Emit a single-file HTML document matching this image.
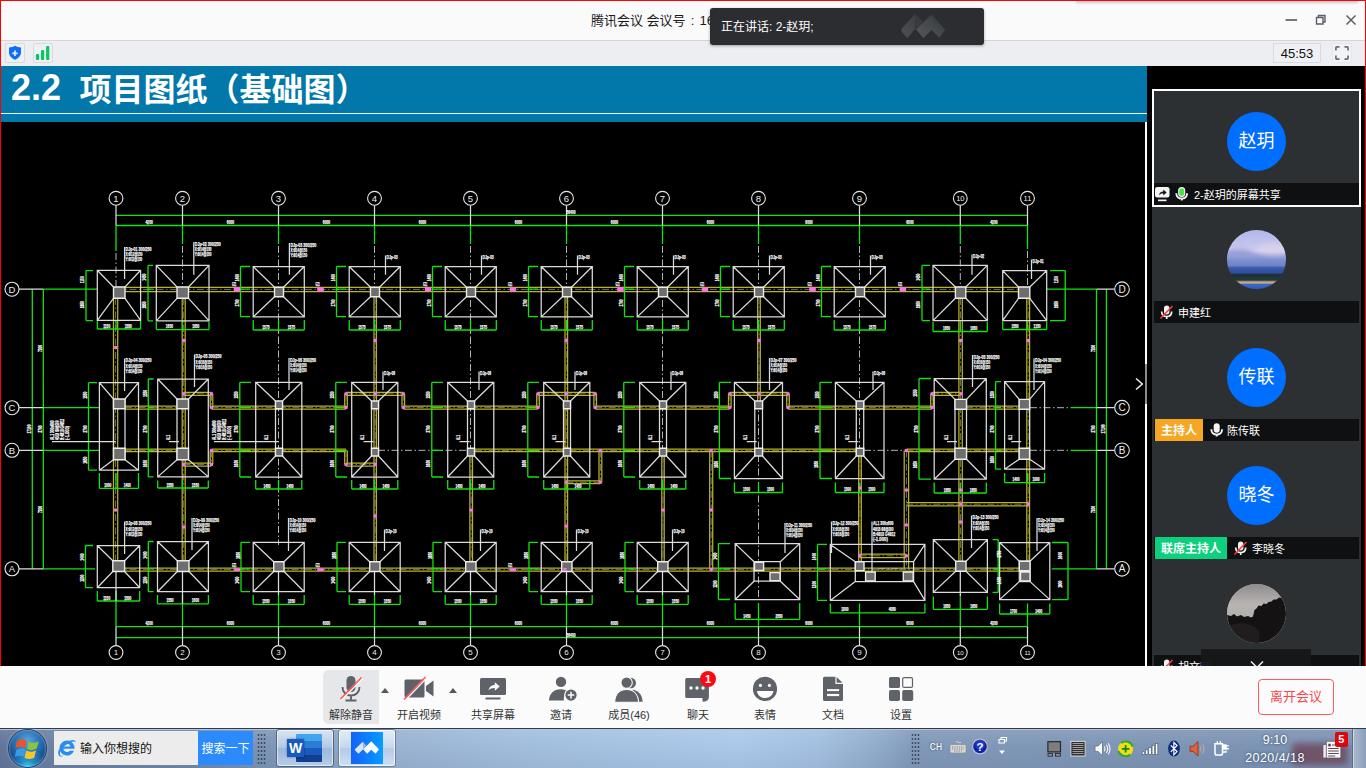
<!DOCTYPE html>
<html lang="zh-CN"><head><meta charset="utf-8"><title>腾讯会议</title>
<style>
*{box-sizing:border-box;margin:0;padding:0}
html,body{width:1366px;height:768px;overflow:hidden;background:#000}
body{position:relative;font-family:"Liberation Sans","Noto Sans CJK SC",sans-serif;font-size:12px;color:#222}
.abs{position:absolute}
svg{position:absolute;display:block}
svg.cad{left:0;top:0}
#titlebar{left:0;top:0;width:1366px;height:41px;background:#fafafb;border-bottom:1px solid #d4d5d9}
#title{left:591px;top:9.500px;font-size:13px;color:#1b1b1b;letter-spacing:0;white-space:nowrap}
#strip{left:0;top:41px;width:1366px;height:25px;background:#edeef2}
.sbtn{position:absolute;border:1px solid #d9dade;border-radius:1px;background:#eff0f3}
#timer{left:1273px;top:43px;width:48px;height:20px;font-size:13px;line-height:19px;text-align:center;color:#111}
#speaking{left:710px;top:8px;width:274px;height:37px;background:#2b2d31;border-radius:3px;box-shadow:0 1px 3px rgba(0,0,0,.35);color:#fff;font-size:12px;line-height:39px;padding-left:11px;white-space:nowrap}
#slidehead{left:0;top:66px;width:1147px;height:56px;background:#0277a9}
#slidehead i{position:absolute;left:0;top:46.6px;width:1147px;height:1.4px;background:#f4f8fb}
#slidetitle{left:12px;top:64px;font-size:32px;line-height:46px;color:#fff;white-space:pre;font-family:"Liberation Sans","Noto Sans CJK SC",sans-serif}
#slidetitle b{position:absolute;left:0;top:0}
#slidetitle #st2{left:67.500px;top:2.500px}
#stage{left:0;top:122px;width:1147px;height:544px;background:#000}
#vline{left:1145px;top:122px;width:2px;height:544px;background:#fff}
#redL{left:0;top:0;width:1px;height:728px;background:#f00}
#redT{left:0;top:0;width:1366px;height:1px;background:#f00}
#redR{left:1365px;top:0;width:1px;height:728px;background:#f00}
#pink{left:1077px;top:0;width:280px;height:1px;background:#c00;box-shadow:0 1px 2.5px 1px rgba(0,0,0,.2)}
/* side panel */
#side{left:1147px;top:66px;width:218px;height:600px;background:#000;overflow:hidden}
.tile{position:absolute;left:5px;width:209px;height:118px;background:#2d3033}
.tile .av{position:absolute;left:75px;top:23px;width:59px;height:59px;border-radius:50%;background:#006eff;color:#fff;font-size:18px;line-height:58px;text-align:center;overflow:hidden}
.tile .nb{position:absolute;left:2px;top:94px;width:205px;height:22px;background:#0f1012;color:#fff;font-size:12px;line-height:24px;white-space:nowrap}
.tile .nb span.n{position:absolute;top:0}
.badge{position:absolute;left:0;top:0;height:22px;color:#fff;font-size:12px;line-height:24px;font-weight:bold;text-align:center}
/* toolbar */
#toolbar{left:0;top:666px;width:1366px;height:62px;background:#fbfbfc}
.tb{position:absolute;top:0;height:62px;text-align:center;font-size:11px;color:#333;white-space:nowrap}
.tb span{position:absolute;left:-20px;right:-20px;top:41px;line-height:16px}
#leave{left:1258px;top:13px;width:76px;height:36px;border:1px solid #ff5a5f;border-radius:4px;color:#f5474c;font-size:13px;line-height:34px;text-align:center}
/* taskbar */
#taskbar{left:0;top:728px;width:1366px;height:40px;background:linear-gradient(rgba(255,255,255,.10),rgba(255,255,255,0) 45%,rgba(0,0,20,.05)),linear-gradient(90deg,#62769a 0,#6a81a3 3%,#7189ab 14%,#7e97b8 20%,#9ab3d2 29%,#a3bfdf 40%,#abc8e9 54%,#a3bfe0 60%,#8fa9c9 64.6%,#8199b9 67%,#7b92b2 100%)}
#taskbar .topl{position:absolute;left:0;top:0;width:1366px;height:2px;background:linear-gradient(#2f3a4c 0,#2f3a4c 50%,#b9c6d9 50%,#b9c6d9 100%)}
</style></head><body>
<div id="titlebar" class="abs"></div>
<div id="title" class="abs">腾讯会议 会议号<span style="margin:0 1.500px"> : </span>164 386 779</div>
<div id="strip" class="abs"></div>
<div class="sbtn" style="left:5px;top:43px;width:20px;height:20px;border-radius:2px"></div>
<div class="sbtn" style="left:33px;top:43px;width:20px;height:20px;border-radius:2px"></div>
<svg style="left:8px;top:45px" width="14" height="16" viewBox="8 45 14 16"><path d="M15 45.800C13.200 47 11 47.400 9 47.400v5.200c0 3.400 2.700 5.800 6 7.200 3.300-1.400 6-3.800 6-7.200v-5.200c-2 0-4.200-.4-6-1.600z" fill="#0d6efd"/><path d="M15 50.600v5.400M12.300 53.300h5.400" stroke="#e6efff" stroke-width="1.700"/></svg>
<svg style="left:35px;top:45px" width="16" height="16" viewBox="35 45 16 16"><rect x="35.900" y="53.900" width="3.200" height="6" rx="1" fill="#06c862"/><rect x="41" y="50" width="3.200" height="9.900" rx="1" fill="#06c862"/><rect x="46.100" y="46" width="3.200" height="13.900" rx="1" fill="#06c862"/></svg>
<div id="timer" class="abs sbtn">45:53</div>
<div class="sbtn" style="left:1332px;top:43px;width:20px;height:20px;background:#f2f3f6;border-color:#e6e7ea"></div>
<svg style="left:1335px;top:46px" width="14" height="14" viewBox="0 0 14 14"><path d="M.9 4.500V1.900q0-1 1-1h2.600M9.500.9h2.600q1 0 1 1v2.600M13.100 9.500v2.600q0 1-1 1H9.500M4.500 13.100H1.900q-1 0-1-1V9.500" fill="none" stroke="#6a6d75" stroke-width="1.700"/></svg>
<svg style="left:1280px;top:10px" width="80" height="20" viewBox="0 0 80 20"><path d="M5.500 10h11.500" stroke="#5c5f66" stroke-width="1.700"/><path d="M36.500 7.500h6.500v6.500h-6.500zM38.500 7.500v-2h6.500v6.500h-2" fill="none" stroke="#5c5f66" stroke-width="1.400"/><path d="M66.500 5.500l9 9M75.500 5.500l-9 9" stroke="#5c5f66" stroke-width="1.500"/></svg>
<div id="pink" class="abs"></div>
<div id="speaking" class="abs">正在讲话: 2-赵玥;</div>
<svg style="left:896px;top:10px" width="56" height="32" viewBox="896 10 56 32"><defs><linearGradient id="lg1" x1="0" y1="1" x2="1" y2="0"><stop offset="0" stop-color="#54575b"/><stop offset=".55" stop-color="#44474b"/><stop offset="1" stop-color="#2f3236"/></linearGradient><linearGradient id="lg2" x1="0" y1="1" x2="1" y2="0"><stop offset="0" stop-color="#4d5054"/><stop offset="1" stop-color="#3c3f43"/></linearGradient></defs><path d="M915.200 13.900L902 28.300q-1.500 1.800 0 3.600L907.300 38l7.900-8.900z" fill="url(#lg2)"/><path d="M915.200 13.900l7.900 7.900-7.500 7.300z" fill="#393b3f"/><path d="M931.400 14.600L915.900 29.400l7.600 8.600 7.900-7.900 7.900 7.500 5.900-7.900z" fill="url(#lg1)"/></svg>
<div id="slidehead" class="abs"><i></i></div>
<div id="slidetitle" class="abs"><b style="font-size:36px;left:-1px;top:1px">2.2</b><b id="st2">项目图纸（基础图）</b></div>
<div id="stage" class="abs"></div>
<div id="vline" class="abs"></div>
<div id="redL" class="abs"></div><div id="redT" class="abs"></div><div id="redR" class="abs"></div>
<svg class="cad" width="1366" height="768" viewBox="0 0 1366 768">
<g fill="none" stroke-linecap="butt">
<path stroke="#b9b420" stroke-width="1.25" d="M116 287.3L1027.5 287.3M116 291.5L1027.5 291.5M116 568L1027.5 568M116 571.2L1027.5 571.2M125 406.2L177 406.2M125 409L177 409M183.5 392.3L211.5 392.3M183.5 395.3L211.5 395.3M210.2 393.8L210.2 407.6M212.8 393.8L212.8 407.6M211.5 406.2L346 406.2M211.5 409L346 409M344.7 393.8L344.7 407.6M347.3 393.8L347.3 407.6M346 392.3L403.3 392.3M346 395.3L403.3 395.3M402 393.8L402 407.6M404.6 393.8L404.6 407.6M403.3 406.2L538 406.2M403.3 409L538 409M536.7 393.8L536.7 407.6M539.3 393.8L539.3 407.6M538 392.3L595.2 392.3M538 395.3L595.2 395.3M593.9 393.8L593.9 407.6M596.5 393.8L596.5 407.6M595.2 406.2L729.8 406.2M595.2 409L729.8 409M728.5 393.8L728.5 407.6M731.1 393.8L731.1 407.6M729.8 392.3L788 392.3M729.8 395.3L788 395.3M786.7 393.8L786.7 407.6M789.3 393.8L789.3 407.6M788 406.2L932 406.2M788 409L932 409M930.7 393.8L930.7 407.6M933.3 393.8L933.3 407.6M932 392.3L961 392.3M932 395.3L961 395.3M966 406.2L1019 406.2M966 409L1019 409M125 449.1L177 449.1M125 451.7L177 451.7M183.5 463.1L211.5 463.1M183.5 466.1L211.5 466.1M210.2 450.4L210.2 464.6M212.8 450.4L212.8 464.6M211.5 449.1L346 449.1M211.5 451.7L346 451.7M344.7 450.4L344.7 464.6M347.3 450.4L347.3 464.6M346 463.1L375.2 463.1M346 466.1L375.2 466.1M475 449.1L856.5 449.1M475 451.7L856.5 451.7M599 450.4L599 482.3M601.8 450.4L601.8 482.3M566.3 480.9L600.4 480.9M566.3 483.7L600.4 483.7M709.7 450.4L709.7 569.6M712.7 450.4L712.7 569.6M906.4 449.1L1019 449.1M906.4 451.7L1019 451.7M904.2 450.4L904.2 569.6M908.6 450.4L908.6 569.6M906.4 502.5L1029 502.5M906.4 505.9L1029 505.9M859.6 554.1L906.4 554.1M859.6 557.5L906.4 557.5M113.5 298L113.5 561M117.7 298L117.7 561M182.2 298L182.2 561M185.2 298L185.2 561M374 297L374 561.7M376.4 297L376.4 561.7M469.9 456L469.9 561.7M472.5 456L472.5 561.7M565 297L565 561.7M567.6 297L567.6 561.7M661.8 456L661.8 561.7M664.2 456L664.2 561.7M757.7 297L757.7 401M760.3 297L760.3 401M858.7 456L858.7 561.7M861.3 456L861.3 561.7M958.9 298L958.9 561.2M962.3 298L962.3 561.2M1026.8 298L1026.8 561.2M1029.6 298L1029.6 561.2"/>
<path stroke="#6f6f7a" stroke-width="1" stroke-dasharray="7 2.5 1.5 2.5" d="M116 289.4H1027.5M116 569.6H1027.5M125 407.6H177M183.5 393.8H211.5M211.5 393.8V407.6M211.5 407.6H346M346 393.8V407.6M346 393.8H403.3M403.3 393.8V407.6M403.3 407.6H538M538 393.8V407.6M538 393.8H595.2M595.2 393.8V407.6M595.2 407.6H729.8M729.8 393.8V407.6M729.8 393.8H788M788 393.8V407.6M788 407.6H932M932 393.8V407.6M932 393.8H961M966 407.6H1019M125 450.4H177M183.5 464.6H211.5M211.5 450.4V464.6M211.5 450.4H346M346 450.4V464.6M346 464.6H375.2M475 450.4H856.5M600.4 450.4V482.3M566.3 482.3H600.4M711.2 450.4V569.6M906.4 450.4H1019M906.4 450.4V569.6M906.4 504.2H1029M859.6 555.8H906.4M115.6 298V561M183.7 298V561M375.2 297V561.7M471.2 456V561.7M566.3 297V561.7M663 456V561.7M759 297V401M860 456V561.7M960.6 298V561.2M1028.2 298V561.2"/>
<path stroke="#b4b4b4" stroke-width="1" stroke-dasharray="7 2.5 1.5 2.5" d="M116 253L116 287M182.5 246L182.5 287M278.5 246L278.5 337M374.5 246L374.5 287.3M470.5 246L470.5 337M566.5 246L566.5 287.3M662.5 246L662.5 337M758.5 246L758.5 287.3M859.5 246L859.5 337M960.3 246L960.3 287M1027.5 251L1027.5 287M278.5 337L278.5 545M470.5 337L470.5 456M662.5 337L662.5 456M758.5 401L758.5 600M859.5 337L859.5 456M378 450.3L468 450.3M864 450.3L906 450.3M878 568.8L902 568.8M1030 407.7L1070.6 407.7M1030 450.3L1070.6 450.3"/>
<path stroke="#10e410" stroke-width="1.3" d="M116 225.5L116 251M182.5 225.5L182.5 244M278.5 225.5L278.5 244M374.5 225.5L374.5 244M470.5 225.5L470.5 244M566.5 225.5L566.5 244M662.5 225.5L662.5 244M758.5 225.5L758.5 244M859.5 225.5L859.5 244M960.3 225.5L960.3 244M1027.5 225.5L1027.5 249M116 215.4L1027.5 215.4M116 225.5L1027.5 225.5M116 626.6L1027.5 626.6M116 637.7L1027.5 637.7M32.3 289.2L32.3 568.8M43.3 289.2L43.3 568.8M1096.5 289.2L1096.5 568.8M1106.4 289.2L1106.4 568.8M43.3 289.2L97 289.2M43.3 407.7L99 407.7M43.3 450.3L99 450.3M43.3 568.8L95 568.8M1047 289.2L1096.5 289.2M1070.6 407.7L1096.5 407.7M1070.6 450.3L1096.5 450.3M1051.7 568.8L1096.5 568.8M86 270.6L86 320.6M86 270.6L93 270.6M86 289.2L93 289.2M86 320.6L93 320.6M148 265.4L148 320.8M148 265.4L153 265.4M148 289.2L153 289.2M148 320.8L153 320.8M240.5 266.5L240.5 316.7M240.5 266.5L250 266.5M240.5 289.2L250 289.2M240.5 316.7L250 316.7M336.5 266.5L336.5 316.7M336.5 266.5L346 266.5M336.5 289.2L346 289.2M336.5 316.7L346 316.7M432.5 266.5L432.5 316.7M432.5 266.5L442 266.5M432.5 289.2L442 289.2M432.5 316.7L442 316.7M528.5 266.5L528.5 316.7M528.5 266.5L538 266.5M528.5 289.2L538 289.2M528.5 316.7L538 316.7M624.5 266.5L624.5 316.7M624.5 266.5L634 266.5M624.5 289.2L634 289.2M624.5 316.7L634 316.7M720.5 266.5L720.5 316.7M720.5 266.5L730 266.5M720.5 289.2L730 289.2M720.5 316.7L730 316.7M821.5 266.5L821.5 316.7M821.5 266.5L831 266.5M821.5 289.2L831 289.2M821.5 316.7L831 316.7M922 265.4L922 320.6M922 265.4L930 265.4M922 289.2L930 289.2M922 320.6L930 320.6M1065.2 270.6L1065.2 320.6M1065.2 270.6L1050 270.6M1065.2 289.2L1050 289.2M1065.2 320.6L1050 320.6M97.3 329L140.6 329M97.3 321L97.3 329M116 321L116 329M140.6 321L140.6 329M156.3 329.6L209 329.6M156.3 322L156.3 329.6M182.5 322L182.5 329.6M209 322L209 329.6M253.2 330L304.3 330M253.2 320L253.2 330M278.5 320L278.5 330M304.3 320L304.3 330M349.2 330L400.3 330M349.2 320L349.2 330M374.5 320L374.5 330M400.3 320L400.3 330M445.2 330L496.3 330M445.2 320L445.2 330M470.5 320L470.5 330M496.3 320L496.3 330M541.2 330L592.3 330M541.2 320L541.2 330M566.5 320L566.5 330M592.3 320L592.3 330M637.2 330L688.3 330M637.2 320L637.2 330M662.5 320L662.5 330M688.3 320L688.3 330M733.2 330L784.3 330M733.2 320L733.2 330M758.5 320L758.5 330M784.3 320L784.3 330M834.2 330L885.3 330M834.2 320L834.2 330M859.5 320L859.5 330M885.3 320L885.3 330M933 331.5L987.3 331.5M933 322L933 331.5M960.3 322L960.3 331.5M987.3 322L987.3 331.5M1002.7 329.5L1046.7 329.5M1002.7 321.5L1002.7 329.5M1027.5 321.5L1027.5 329.5M1046.7 321.5L1046.7 329.5M88.5 382.7L88.5 470.2M88.5 382.7L97 382.7M88.5 407.7L97 407.7M88.5 450.3L97 450.3M88.5 470.2L97 470.2M148.3 379L148.3 476.9M148.3 379L153.5 379M148.3 407.7L153.5 407.7M148.3 450.3L153.5 450.3M148.3 476.9L153.5 476.9M239.8 382.3L239.8 477M239.8 382.3L251 382.3M239.8 407.7L251 407.7M239.8 450.3L251 450.3M239.8 477L251 477M335.8 382.3L335.8 477M335.8 382.3L347 382.3M335.8 407.7L347 407.7M335.8 450.3L347 450.3M335.8 477L347 477M431.8 382.3L431.8 477M431.8 382.3L443 382.3M431.8 407.7L443 407.7M431.8 450.3L443 450.3M431.8 477L443 477M527.8 382.3L527.8 477M527.8 382.3L539 382.3M527.8 407.7L539 407.7M527.8 450.3L539 450.3M527.8 477L539 477M623.8 382.3L623.8 477M623.8 382.3L635 382.3M623.8 407.7L635 407.7M623.8 450.3L635 450.3M623.8 477L635 477M719.4 382.3L719.4 478.5M719.4 382.3L731 382.3M719.4 407.7L731 407.7M719.4 450.3L731 450.3M719.4 478.5L731 478.5M820 382.3L820 478.5M820 382.3L832 382.3M820 407.7L832 407.7M820 450.3L832 450.3M820 478.5L832 478.5M919 378.5L919 479.2M919 378.5L931 378.5M919 407.7L931 407.7M919 450.3L931 450.3M919 479.2L931 479.2M995.6 381.7L995.6 469.2M995.6 381.7L1001 381.7M995.6 407.7L1001 407.7M995.6 450.3L1001 450.3M995.6 469.2L1001 469.2M99.4 488.3L138.5 488.3M99.4 473L99.4 488.3M116 473L116 488.3M138.5 473L138.5 488.3M157.7 488L208.3 488M157.7 480.5L157.7 488M182.5 480.5L182.5 488M208.3 480.5L208.3 488M255.7 489L301.8 489M255.7 480L255.7 489M278.5 480L278.5 489M301.8 480L301.8 489M351.7 489L397.8 489M351.7 480L351.7 489M374.5 480L374.5 489M397.8 480L397.8 489M447.7 489L493.8 489M447.7 480L447.7 489M470.5 480L470.5 489M493.8 480L493.8 489M543.7 489L589.8 489M543.7 480L543.7 489M566.5 480L566.5 489M589.8 480L589.8 489M639.7 489L685.8 489M639.7 480L639.7 489M662.5 480L662.5 489M685.8 480L685.8 489M734.4 492.5L782.5 492.5M734.4 482.5L734.4 492.5M758.5 482.5L758.5 492.5M782.5 482.5L782.5 492.5M835.4 492.5L884 492.5M835.4 482.5L835.4 492.5M859.5 482.5L859.5 492.5M884 482.5L884 492.5M934.2 493L986.3 493M934.2 482.5L934.2 493M960.3 482.5L960.3 493M986.3 482.5L986.3 493M1004.6 482.7L1044.6 482.7M1004.6 473L1004.6 482.7M1027.5 473L1027.5 482.7M1044.6 473L1044.6 482.7M85.5 545.5L85.5 587.7M85.5 545.5L93 545.5M85.5 568.8L93 568.8M85.5 587.7L93 587.7M148.3 541.5L148.3 591.7M148.3 541.5L153.5 541.5M148.3 568.8L153.5 568.8M148.3 591.7L153.5 591.7M241 542.3L241 591.7M241 542.3L250 542.3M241 568.8L250 568.8M241 591.7L250 591.7M337 542.3L337 591.7M337 542.3L346 542.3M337 568.8L346 568.8M337 591.7L346 591.7M433 542.3L433 591.7M433 542.3L442 542.3M433 568.8L442 568.8M433 591.7L442 591.7M529 542.3L529 591.7M529 542.3L538 542.3M529 568.8L538 568.8M529 591.7L538 591.7M625 542.3L625 591.7M625 542.3L634 542.3M625 568.8L634 568.8M625 591.7L634 591.7M718.4 543.6L718.4 599.5M718.4 543.6L730 543.6M718.4 568.8L730 568.8M718.4 599.5L730 599.5M817.5 544.4L817.5 600.4M817.5 544.4L827 544.4M817.5 568.8L827 568.8M817.5 600.4L827 600.4M998.2 539.6L998.2 592.4M998.2 539.6L992.5 539.6M998.2 568.8L992.5 568.8M998.2 592.4L992.5 592.4M1068 542.5L1068 599.6M1068 542.5L1052 542.5M1068 568.8L1052 568.8M1068 599.6L1052 599.6M97.3 601L139.7 601M97.3 591L97.3 601M116 591L116 601M139.7 591L139.7 601M157.5 603.8L208.4 603.8M157.5 595L157.5 603.8M182.5 595L182.5 603.8M208.4 595L208.4 603.8M253.2 604.3L304.2 604.3M253.2 595L253.2 604.3M278.5 595L278.5 604.3M304.2 595L304.2 604.3M349.2 604.3L400.2 604.3M349.2 595L349.2 604.3M374.5 595L374.5 604.3M400.2 595L400.2 604.3M445.2 604.3L496.2 604.3M445.2 595L445.2 604.3M470.5 595L470.5 604.3M496.2 595L496.2 604.3M541.2 604.3L592.2 604.3M541.2 595L541.2 604.3M566.5 595L566.5 604.3M592.2 595L592.2 604.3M637.2 604.3L688.2 604.3M637.2 595L637.2 604.3M662.5 595L662.5 604.3M688.2 595L688.2 604.3M735.2 619.3L799.7 619.3M735.2 603L735.2 619.3M758.5 603L758.5 619.3M799.7 603L799.7 619.3M830.3 612.9L924.9 612.9M830.3 603.5L830.3 612.9M859.5 603.5L859.5 612.9M924.9 603.5L924.9 612.9M933.3 609.3L987.4 609.3M933.3 596.5L933.3 609.3M960.3 596.5L960.3 609.3M987.4 596.5L987.4 609.3M999.6 614L1049.8 614M999.6 603.5L999.6 614M1027.5 603.5L1027.5 614M1049.8 603.5L1049.8 614M116 601L116 626.5M182.5 603.8L182.5 626.5M278.5 595L278.5 626.5M374.5 595L374.5 626.5M470.5 595L470.5 626.5M566.5 595L566.5 626.5M662.5 595L662.5 626.5M758.5 603L758.5 626.5M859.5 603.5L859.5 626.5M960.3 596.5L960.3 626.5M1027.5 603.5L1027.5 626.5"/>
<path stroke="#dcdcdc" stroke-width="1.25" d="M97.3 270.3H140.6V320.3H97.3ZM97.3 270.3L113.5 287M140.6 270.3L125 287M97.3 320.3L113.5 298.3M140.6 320.3L125 298.3M156.3 265.4H209V320.8H156.3ZM156.3 265.4L177 287M209 265.4L188.5 287M156.3 320.8L177 298.3M209 320.8L188.5 298.3M933 265.4H987.3V320.6H933ZM933 265.4L955.4 287M987.3 265.4L965.8 287M933 320.6L955.4 298.3M987.3 320.6L965.8 298.3M1002.7 270.6H1046.7V320.6H1002.7ZM1002.7 270.6L1018.5 287M1046.7 270.6L1029.8 287M1002.7 320.6L1018.5 298.3M1046.7 320.6L1029.8 298.3M253.2 266.5H304.3V316.9H253.2ZM253.2 266.5L274.5 287.3M304.3 266.5L283.5 287.3M253.2 316.9L274.5 296.7M304.3 316.9L283.5 296.7M349.2 266.5H400.3V316.9H349.2ZM349.2 266.5L370.5 287.3M400.3 266.5L379.5 287.3M349.2 316.9L370.5 296.7M400.3 316.9L379.5 296.7M445.2 266.5H496.3V316.9H445.2ZM445.2 266.5L466.5 287.3M496.3 266.5L475.5 287.3M445.2 316.9L466.5 296.7M496.3 316.9L475.5 296.7M541.2 266.5H592.3V316.9H541.2ZM541.2 266.5L562.5 287.3M592.3 266.5L571.5 287.3M541.2 316.9L562.5 296.7M592.3 316.9L571.5 296.7M637.2 266.5H688.3V316.9H637.2ZM637.2 266.5L658.5 287.3M688.3 266.5L667.5 287.3M637.2 316.9L658.5 296.7M688.3 316.9L667.5 296.7M733.2 266.5H784.3V316.9H733.2ZM733.2 266.5L754.5 287.3M784.3 266.5L763.5 287.3M733.2 316.9L754.5 296.7M784.3 316.9L763.5 296.7M834.2 266.5H885.3V316.9H834.2ZM834.2 266.5L855.5 287.3M885.3 266.5L864.5 287.3M834.2 316.9L855.5 296.7M885.3 316.9L864.5 296.7M99.4 382.7H138.5V470.2H99.4ZM99.4 382.7L113.5 399M138.5 382.7L125 399M99.4 470.2L113.5 459.8M138.5 470.2L125 459.8M113.5 399L113.5 459.8M125 399L125 459.8M157.7 379H208.3V476.9H157.7ZM157.7 379L177 399M208.3 379L188.5 399M157.7 476.9L177 459.8M208.3 476.9L188.5 459.8M177 399L177 459.8M188.5 399L188.5 459.8M169 441.5L179 441.5M734.4 382.3H782.5V478.5H734.4ZM734.4 382.3L754.8 401M782.5 382.3L762.5 401M734.4 478.5L754.8 456M782.5 478.5L762.5 456M754.8 401L754.8 456M762.5 401L762.5 456M746.8 441.5L756.8 441.5M835.4 382.3H884V478.5H835.4ZM835.4 382.3L856.3 401M884 382.3L863.7 401M835.4 478.5L856.3 456M884 478.5L863.7 456M856.3 401L856.3 456M863.7 401L863.7 456M848.3 441.5L858.3 441.5M934.2 378.5H986.3V479.2H934.2ZM934.2 378.5L955 399.4M986.3 378.5L966.5 399.4M934.2 479.2L955 459.2M986.3 479.2L966.5 459.2M955 399.4L955 459.2M966.5 399.4L966.5 459.2M947 441.5L957 441.5M1004.6 381.7H1044.6V469.2H1004.6ZM1004.6 381.7L1019.2 399.4M1044.6 381.7L1029.6 399.4M1004.6 469.2L1019.2 459.2M1044.6 469.2L1029.6 459.2M1019.2 399.4L1019.2 459.2M1029.6 399.4L1029.6 459.2M1011.2 441.5L1021.2 441.5M255.7 382.3H301.8V477H255.7ZM255.7 382.3L275.5 401M301.8 382.3L282.5 401M255.7 477L275.5 456M301.8 477L282.5 456M275.5 401L275.5 456M282.5 401L282.5 456M267.5 441.5L277.5 441.5M351.7 382.3H397.8V477H351.7ZM351.7 382.3L371.5 401M397.8 382.3L378.5 401M351.7 477L371.5 456M397.8 477L378.5 456M371.5 401L371.5 456M378.5 401L378.5 456M363.5 441.5L373.5 441.5M447.7 382.3H493.8V477H447.7ZM447.7 382.3L467.5 401M493.8 382.3L474.5 401M447.7 477L467.5 456M493.8 477L474.5 456M467.5 401L467.5 456M474.5 401L474.5 456M459.5 441.5L469.5 441.5M543.7 382.3H589.8V477H543.7ZM543.7 382.3L563.5 401M589.8 382.3L570.5 401M543.7 477L563.5 456M589.8 477L570.5 456M563.5 401L563.5 456M570.5 401L570.5 456M555.5 441.5L565.5 441.5M639.7 382.3H685.8V477H639.7ZM639.7 382.3L659.5 401M685.8 382.3L666.5 401M639.7 477L659.5 456M685.8 477L666.5 456M659.5 401L659.5 456M666.5 401L666.5 456M651.5 441.5L661.5 441.5M97.3 545.5H139.7V587.7H97.3ZM97.3 545.5L112.8 560.8M139.7 545.5L124.6 560.8M97.3 587.7L112.8 571.5M139.7 587.7L124.6 571.5M157.5 541.5H208.4V591.7H157.5ZM157.5 541.5L177.3 560.8M208.4 541.5L189 560.8M157.5 591.7L177.3 571.5M208.4 591.7L189 571.5M933.3 539.6H987.4V592.4H933.3ZM933.3 539.6L955.7 561.2M987.4 539.6L966 561.2M933.3 592.4L955.7 571.3M987.4 592.4L966 571.3M253.2 542.3H304.2V591.7H253.2ZM253.2 542.3L273.7 561.7M304.2 542.3L284 561.7M253.2 591.7L273.7 571.5M304.2 591.7L284 571.5M349.2 542.3H400.2V591.7H349.2ZM349.2 542.3L369.7 561.7M400.2 542.3L380 561.7M349.2 591.7L369.7 571.5M400.2 591.7L380 571.5M445.2 542.3H496.2V591.7H445.2ZM445.2 542.3L465.7 561.7M496.2 542.3L476 561.7M445.2 591.7L465.7 571.5M496.2 591.7L476 571.5M541.2 542.3H592.2V591.7H541.2ZM541.2 542.3L561.7 561.7M592.2 542.3L572 561.7M541.2 591.7L561.7 571.5M592.2 591.7L572 571.5M637.2 542.3H688.2V591.7H637.2ZM637.2 542.3L657.7 561.7M688.2 542.3L668 561.7M637.2 591.7L657.7 571.5M688.2 591.7L668 571.5M735.2 543.6H799.7V599.5H735.2ZM735.2 543.6L754 561.7M799.7 543.6L780.3 561.7M735.2 599.5L754 581.2M799.7 599.5L780.3 581.2M754 561.7H780.3V581.2H754ZM830.3 544.4H924.9V600.4H830.3ZM830.3 544.4L855.3 561.7M924.9 544.4L913.6 561.7M830.3 600.4L855.3 581.6M924.9 600.4L913.6 581.6M855.3 561.7H913.6V581.6H855.3ZM999.6 542.5H1049.8V599.6H999.6ZM999.6 542.5L1019.3 561.2M1049.8 542.5L1030 561.2M999.6 599.6L1019.3 581.6M1049.8 599.6L1030 581.6M1019.3 561.2H1030V581.6H1019.3ZM116 205.3L116 225.5M116 626.5L116 645.5M182.5 205.3L182.5 225.5M182.5 626.5L182.5 645.5M278.5 205.3L278.5 225.5M278.5 626.5L278.5 645.5M374.5 205.3L374.5 225.5M374.5 626.5L374.5 645.5M470.5 205.3L470.5 225.5M470.5 626.5L470.5 645.5M566.5 205.3L566.5 225.5M566.5 626.5L566.5 645.5M662.5 205.3L662.5 225.5M662.5 626.5L662.5 645.5M758.5 205.3L758.5 225.5M758.5 626.5L758.5 645.5M859.5 205.3L859.5 225.5M859.5 626.5L859.5 645.5M960.3 205.3L960.3 225.5M960.3 626.5L960.3 645.5M1027.5 205.3L1027.5 225.5M1027.5 626.5L1027.5 645.5M116 215.4L116 225.5M1027.5 215.4L1027.5 225.5M19 289.2L43.3 289.2M1096.5 289.2L1114.5 289.2M19 407.7L43.3 407.7M1096.5 407.7L1114.5 407.7M19 450.3L43.3 450.3M1096.5 450.3L1114.5 450.3M19 568.8L43.3 568.8M1096.5 568.8L1114.5 568.8M116 571.5L116 601M182.5 571.5L182.5 603.8M278.5 571.5L278.5 595M374.5 571.5L374.5 595M470.5 571.5L470.5 595M566.5 571.5L566.5 595M662.5 571.5L662.5 595M960.3 571.3L960.3 596.5M124.6 247L124.6 279M193.8 242L193.8 274.8M289.4 243L289.4 274.8M385.5 255.5L385.5 274.8M481.5 255.5L481.5 274.8M577.5 255.5L577.5 274.8M673.5 255.5L673.5 274.8M769.5 255.5L769.5 274.8M870.5 255.5L870.5 274.8M972 254.5L972 274.8M1031.5 259.5L1031.5 279M124.6 358.5L124.6 391M194.5 354.5L194.5 387M289 358L289 390M383 371.5L383 390M479 371.5L479 390M575 371.5L575 390M671 371.5L671 390M769.5 358L769.5 390M873 371.5L873 390M972.5 355L972.5 387M1034 358.5L1034 390M124.6 521.5L124.6 554M192 518L192 550M288.5 518L288.5 551M384.5 529.5L384.5 551M480.5 529.5L480.5 551M576.5 529.5L576.5 551M672.5 529.5L672.5 551M785 523L785 553M831.5 521.5L831.5 553M872 521.5L872 578M971.5 515.5L971.5 548M1037 518L1037 551M52 441.5L116 441.5M214 441.5L278 441.5"/>
</g>
<path fill="#6e6e6e" stroke="#ececec" stroke-width="1.4" d="M113.5 287H125V298.3H113.5ZM177 287H188.5V298.3H177ZM955.4 287H965.8V298.3H955.4ZM1018.5 287H1029.8V298.3H1018.5ZM274.5 287.3H283.5V296.7H274.5ZM370.5 287.3H379.5V296.7H370.5ZM466.5 287.3H475.5V296.7H466.5ZM562.5 287.3H571.5V296.7H562.5ZM658.5 287.3H667.5V296.7H658.5ZM754.5 287.3H763.5V296.7H754.5ZM855.5 287.3H864.5V296.7H855.5ZM113.5 399H125V408.8H113.5ZM113.5 448.3H125V459.8H113.5ZM177 399H188.5V408.8H177ZM177 448.3H188.5V459.8H177ZM754.8 401H762.5V408.8H754.8ZM754.8 448.3H762.5V456H754.8ZM856.3 401H863.7V408.8H856.3ZM856.3 448.3H863.7V456H856.3ZM955 399.4H966.5V409.2H955ZM955 448.3H966.5V459.2H955ZM1019.2 399.4H1029.6V409.2H1019.2ZM1019.2 448.3H1029.6V459.2H1019.2ZM275.5 401H282.5V408.8H275.5ZM275.5 448.3H282.5V456H275.5ZM371.5 401H378.5V408.8H371.5ZM371.5 448.3H378.5V456H371.5ZM467.5 401H474.5V408.8H467.5ZM467.5 448.3H474.5V456H467.5ZM563.5 401H570.5V408.8H563.5ZM563.5 448.3H570.5V456H563.5ZM659.5 401H666.5V408.8H659.5ZM659.5 448.3H666.5V456H659.5ZM112.8 560.8H124.6V571.5H112.8ZM177.3 560.8H189V571.5H177.3ZM955.7 561.2H966V571.3H955.7ZM273.7 561.7H284V571.5H273.7ZM369.7 561.7H380V571.5H369.7ZM465.7 561.7H476V571.5H465.7ZM561.7 561.7H572V571.5H561.7ZM657.7 561.7H668V571.5H657.7ZM754.5 562.3H763.6V570.5H754.5ZM770 572.6H780V580.6H770ZM855.3 561.7H864V570.8H855.3ZM865.6 572H875.2V581H865.6ZM903.3 572H913.2V581H903.3ZM1019.3 561.2H1030V570.8H1019.3ZM1020.5 572H1030V581H1020.5Z"/>
<path fill="#ff6cff" d="M182 392.3H185V395.3H182ZM210 392.3H213V395.3H210ZM210 406.1H213V409.1H210ZM344.5 392.3H347.5V395.3H344.5ZM344.5 406.1H347.5V409.1H344.5ZM401.8 392.3H404.8V395.3H401.8ZM401.8 406.1H404.8V409.1H401.8ZM373.7 392.3H376.7V395.3H373.7ZM536.5 392.3H539.5V395.3H536.5ZM536.5 406.1H539.5V409.1H536.5ZM593.7 392.3H596.7V395.3H593.7ZM593.7 406.1H596.7V409.1H593.7ZM564.8 392.3H567.8V395.3H564.8ZM728.3 392.3H731.3V395.3H728.3ZM728.3 406.1H731.3V409.1H728.3ZM786.5 392.3H789.5V395.3H786.5ZM786.5 406.1H789.5V409.1H786.5ZM757.5 392.3H760.5V395.3H757.5ZM930.5 392.3H933.5V395.3H930.5ZM930.5 406.1H933.5V409.1H930.5ZM959.5 392.3H962.5V395.3H959.5ZM182 463.1H185V466.1H182ZM210 463.1H213V466.1H210ZM210 448.9H213V451.9H210ZM344.5 463.1H347.5V466.1H344.5ZM373.7 463.1H376.7V466.1H373.7ZM598.9 448.9H601.9V451.9H598.9ZM598.9 480.8H601.9V483.8H598.9ZM564.8 480.8H567.8V483.8H564.8ZM709.7 448.9H712.7V451.9H709.7ZM709.7 508.5H712.7V511.5H709.7ZM709.7 568.1H712.7V571.1H709.7ZM904.9 448.9H907.9V451.9H904.9ZM904.9 488.5H907.9V491.5H904.9ZM904.9 523.5H907.9V526.5H904.9ZM959.1 502.7H962.1V505.7H959.1ZM1026.7 502.7H1029.7V505.7H1026.7ZM858.1 554.3H861.1V557.3H858.1ZM904.9 554.3H907.9V557.3H904.9ZM114.1 346H117.1V349H114.1ZM114.1 508.5H117.1V511.5H114.1ZM182.2 339H185.2V342H182.2ZM182.2 525.5H185.2V528.5H182.2ZM373.7 339H376.7V342H373.7ZM373.7 514.5H376.7V517.5H373.7ZM469.7 508.5H472.7V511.5H469.7ZM564.8 339H567.8V342H564.8ZM564.8 524.5H567.8V527.5H564.8ZM661.5 508.5H664.5V511.5H661.5ZM757.5 339H760.5V342H757.5ZM858.5 486.5H861.5V489.5H858.5ZM959.1 339H962.1V342H959.1ZM959.1 488.5H962.1V491.5H959.1ZM959.1 520.5H962.1V523.5H959.1ZM1026.7 339H1029.7V342H1026.7ZM233.8 287.3H240.2V291.3H233.8ZM317.2 287.3H323.8V291.3H317.2ZM424.8 287.3H431.2V291.3H424.8ZM509.8 287.3H516.2V291.3H509.8ZM617.2 287.3H623.8V291.3H617.2ZM701.8 287.3H708.2V291.3H701.8ZM809.2 287.3H815.8V291.3H809.2ZM899.8 287.3H906.2V291.3H899.8ZM233.8 568.3H240.2V570.9H233.8ZM317.2 568.3H323.8V570.9H317.2ZM509.8 568.3H516.2V570.9H509.8ZM563.5 568.1H566.5V571.1H563.5Z"/>
<g fill="#000" stroke="#e8e8e8" stroke-width="1.1"><circle cx="116" cy="198.3" r="6.9"/><circle cx="116" cy="652.5" r="6.9"/><circle cx="182.5" cy="198.3" r="6.9"/><circle cx="182.5" cy="652.5" r="6.9"/><circle cx="278.5" cy="198.3" r="6.9"/><circle cx="278.5" cy="652.5" r="6.9"/><circle cx="374.5" cy="198.3" r="6.9"/><circle cx="374.5" cy="652.5" r="6.9"/><circle cx="470.5" cy="198.3" r="6.9"/><circle cx="470.5" cy="652.5" r="6.9"/><circle cx="566.5" cy="198.3" r="6.9"/><circle cx="566.5" cy="652.5" r="6.9"/><circle cx="662.5" cy="198.3" r="6.9"/><circle cx="662.5" cy="652.5" r="6.9"/><circle cx="758.5" cy="198.3" r="6.9"/><circle cx="758.5" cy="652.5" r="6.9"/><circle cx="859.5" cy="198.3" r="6.9"/><circle cx="859.5" cy="652.5" r="6.9"/><circle cx="960.3" cy="198.3" r="6.9"/><circle cx="960.3" cy="652.5" r="6.9"/><circle cx="1027.5" cy="198.3" r="6.9"/><circle cx="1027.5" cy="652.5" r="6.9"/><circle cx="12" cy="289.2" r="7"/><circle cx="1122" cy="289.2" r="7.3"/><circle cx="12" cy="407.7" r="7"/><circle cx="1122" cy="407.7" r="7.3"/><circle cx="12" cy="450.3" r="7"/><circle cx="1122" cy="450.3" r="7.3"/><circle cx="12" cy="568.8" r="7"/><circle cx="1122" cy="568.8" r="7.3"/></g>
<g fill="#ededed" text-anchor="middle" font-family="'Liberation Sans',sans-serif"><text x="116" y="201.7" font-size="9.5">1</text><text x="116" y="655.4" font-size="8.0">1</text><text x="182.5" y="201.7" font-size="9.5">2</text><text x="182.5" y="655.4" font-size="8.0">2</text><text x="278.5" y="201.7" font-size="9.5">3</text><text x="278.5" y="655.4" font-size="8.0">3</text><text x="374.5" y="201.7" font-size="9.5">4</text><text x="374.5" y="655.4" font-size="8.0">4</text><text x="470.5" y="201.7" font-size="9.5">5</text><text x="470.5" y="655.4" font-size="8.0">5</text><text x="566.5" y="201.7" font-size="9.5">6</text><text x="566.5" y="655.4" font-size="8.0">6</text><text x="662.5" y="201.7" font-size="9.5">7</text><text x="662.5" y="655.4" font-size="8.0">7</text><text x="758.5" y="201.7" font-size="9.5">8</text><text x="758.5" y="655.4" font-size="8.0">8</text><text x="859.5" y="201.7" font-size="9.5">9</text><text x="859.5" y="655.4" font-size="8.0">9</text><text x="960.3" y="201.1" font-size="7.5">10</text><text x="960.3" y="655" font-size="6.0">10</text><text x="1027.5" y="201.1" font-size="7.5">11</text><text x="1027.5" y="655" font-size="6.0">11</text><text x="12" y="292.6" font-size="9.5">D</text><text x="1122" y="292.8" font-size="10">D</text><text x="12" y="411.1" font-size="9.5">C</text><text x="1122" y="411.3" font-size="10">C</text><text x="12" y="453.7" font-size="9.5">B</text><text x="1122" y="453.9" font-size="10">B</text><text x="12" y="572.2" font-size="9.5">A</text><text x="1122" y="572.4" font-size="10">A</text></g>
<g fill="#fff" stroke="#fff" stroke-width=".25" font-family="'Liberation Sans',sans-serif" font-weight="bold"><text x="125.6" y="250.6" font-size="5.5" text-anchor="start" textLength="25.9" lengthAdjust="spacingAndGlyphs">DJp-01 300/250</text><text x="125.6" y="256" font-size="5.5" text-anchor="start" textLength="16.7" lengthAdjust="spacingAndGlyphs">X:Φ12@150</text><text x="125.6" y="261.4" font-size="5.5" text-anchor="start" textLength="16.7" lengthAdjust="spacingAndGlyphs">Y:Φ12@150</text><text x="194.8" y="245.6" font-size="5.5" text-anchor="start" textLength="25.9" lengthAdjust="spacingAndGlyphs">DJp-02 300/250</text><text x="194.8" y="251" font-size="5.5" text-anchor="start" textLength="16.7" lengthAdjust="spacingAndGlyphs">X:Φ14@150</text><text x="194.8" y="256.4" font-size="5.5" text-anchor="start" textLength="16.7" lengthAdjust="spacingAndGlyphs">Y:Φ14@150</text><text x="290.4" y="246.6" font-size="5.5" text-anchor="start" textLength="25.9" lengthAdjust="spacingAndGlyphs">DJp-03 300/250</text><text x="290.4" y="252" font-size="5.5" text-anchor="start" textLength="16.7" lengthAdjust="spacingAndGlyphs">X:Φ14@150</text><text x="290.4" y="257.4" font-size="5.5" text-anchor="start" textLength="16.7" lengthAdjust="spacingAndGlyphs">Y:Φ14@150</text><text x="386.5" y="259.1" font-size="5.5" text-anchor="start" textLength="11.1" lengthAdjust="spacingAndGlyphs">DJp-03</text><text x="482.5" y="259.1" font-size="5.5" text-anchor="start" textLength="11.1" lengthAdjust="spacingAndGlyphs">DJp-03</text><text x="578.5" y="259.1" font-size="5.5" text-anchor="start" textLength="11.1" lengthAdjust="spacingAndGlyphs">DJp-03</text><text x="674.5" y="259.1" font-size="5.5" text-anchor="start" textLength="11.1" lengthAdjust="spacingAndGlyphs">DJp-03</text><text x="770.5" y="259.1" font-size="5.5" text-anchor="start" textLength="11.1" lengthAdjust="spacingAndGlyphs">DJp-03</text><text x="871.5" y="259.1" font-size="5.5" text-anchor="start" textLength="11.1" lengthAdjust="spacingAndGlyphs">DJp-03</text><text x="973" y="258.1" font-size="5.5" text-anchor="start" textLength="11.1" lengthAdjust="spacingAndGlyphs">DJp-02</text><text x="1032.5" y="263.1" font-size="5.5" text-anchor="start" textLength="11.1" lengthAdjust="spacingAndGlyphs">DJp-01</text><text x="125.6" y="362.1" font-size="5.5" text-anchor="start" textLength="25.9" lengthAdjust="spacingAndGlyphs">DJp-04 300/250</text><text x="125.6" y="367.5" font-size="5.5" text-anchor="start" textLength="16.7" lengthAdjust="spacingAndGlyphs">X:Φ14@150</text><text x="125.6" y="372.9" font-size="5.5" text-anchor="start" textLength="16.7" lengthAdjust="spacingAndGlyphs">Y:Φ14@150</text><text x="195.5" y="358.1" font-size="5.5" text-anchor="start" textLength="25.9" lengthAdjust="spacingAndGlyphs">DJp-05 300/250</text><text x="195.5" y="363.5" font-size="5.5" text-anchor="start" textLength="16.7" lengthAdjust="spacingAndGlyphs">X:Φ16@150</text><text x="195.5" y="368.9" font-size="5.5" text-anchor="start" textLength="16.7" lengthAdjust="spacingAndGlyphs">Y:Φ16@150</text><text x="290" y="361.6" font-size="5.5" text-anchor="start" textLength="25.9" lengthAdjust="spacingAndGlyphs">DJp-06 300/250</text><text x="290" y="367" font-size="5.5" text-anchor="start" textLength="16.7" lengthAdjust="spacingAndGlyphs">X:Φ14@150</text><text x="290" y="372.4" font-size="5.5" text-anchor="start" textLength="16.7" lengthAdjust="spacingAndGlyphs">Y:Φ14@150</text><text x="384" y="375.1" font-size="5.5" text-anchor="start" textLength="11.1" lengthAdjust="spacingAndGlyphs">DJp-06</text><text x="480" y="375.1" font-size="5.5" text-anchor="start" textLength="11.1" lengthAdjust="spacingAndGlyphs">DJp-06</text><text x="576" y="375.1" font-size="5.5" text-anchor="start" textLength="11.1" lengthAdjust="spacingAndGlyphs">DJp-06</text><text x="672" y="375.1" font-size="5.5" text-anchor="start" textLength="11.1" lengthAdjust="spacingAndGlyphs">DJp-06</text><text x="770.5" y="361.6" font-size="5.5" text-anchor="start" textLength="25.9" lengthAdjust="spacingAndGlyphs">DJp-07 300/250</text><text x="770.5" y="367" font-size="5.5" text-anchor="start" textLength="16.7" lengthAdjust="spacingAndGlyphs">X:Φ14@150</text><text x="770.5" y="372.4" font-size="5.5" text-anchor="start" textLength="16.7" lengthAdjust="spacingAndGlyphs">Y:Φ14@150</text><text x="874" y="375.1" font-size="5.5" text-anchor="start" textLength="11.1" lengthAdjust="spacingAndGlyphs">DJp-06</text><text x="973.5" y="358.6" font-size="5.5" text-anchor="start" textLength="25.9" lengthAdjust="spacingAndGlyphs">DJp-05 300/250</text><text x="973.5" y="364" font-size="5.5" text-anchor="start" textLength="16.7" lengthAdjust="spacingAndGlyphs">X:Φ16@150</text><text x="973.5" y="369.4" font-size="5.5" text-anchor="start" textLength="16.7" lengthAdjust="spacingAndGlyphs">Y:Φ16@150</text><text x="1035" y="362.1" font-size="5.5" text-anchor="start" textLength="25.9" lengthAdjust="spacingAndGlyphs">DJp-04 300/250</text><text x="1035" y="367.5" font-size="5.5" text-anchor="start" textLength="16.7" lengthAdjust="spacingAndGlyphs">X:Φ14@150</text><text x="1035" y="372.9" font-size="5.5" text-anchor="start" textLength="16.7" lengthAdjust="spacingAndGlyphs">Y:Φ14@150</text><text x="125.6" y="525.1" font-size="5.5" text-anchor="start" textLength="25.9" lengthAdjust="spacingAndGlyphs">DJp-08 300/250</text><text x="125.6" y="530.5" font-size="5.5" text-anchor="start" textLength="16.7" lengthAdjust="spacingAndGlyphs">X:Φ12@150</text><text x="125.6" y="535.9" font-size="5.5" text-anchor="start" textLength="16.7" lengthAdjust="spacingAndGlyphs">Y:Φ12@150</text><text x="193" y="521.6" font-size="5.5" text-anchor="start" textLength="25.9" lengthAdjust="spacingAndGlyphs">DJp-09 300/250</text><text x="193" y="527" font-size="5.5" text-anchor="start" textLength="16.7" lengthAdjust="spacingAndGlyphs">X:Φ14@150</text><text x="193" y="532.4" font-size="5.5" text-anchor="start" textLength="16.7" lengthAdjust="spacingAndGlyphs">Y:Φ14@150</text><text x="289.5" y="521.6" font-size="5.5" text-anchor="start" textLength="25.9" lengthAdjust="spacingAndGlyphs">DJp-10 300/250</text><text x="289.5" y="527" font-size="5.5" text-anchor="start" textLength="16.7" lengthAdjust="spacingAndGlyphs">X:Φ14@150</text><text x="289.5" y="532.4" font-size="5.5" text-anchor="start" textLength="16.7" lengthAdjust="spacingAndGlyphs">Y:Φ14@150</text><text x="385.5" y="533.1" font-size="5.5" text-anchor="start" textLength="11.1" lengthAdjust="spacingAndGlyphs">DJp-10</text><text x="481.5" y="533.1" font-size="5.5" text-anchor="start" textLength="11.1" lengthAdjust="spacingAndGlyphs">DJp-10</text><text x="577.5" y="533.1" font-size="5.5" text-anchor="start" textLength="11.1" lengthAdjust="spacingAndGlyphs">DJp-10</text><text x="673.5" y="533.1" font-size="5.5" text-anchor="start" textLength="11.1" lengthAdjust="spacingAndGlyphs">DJp-10</text><text x="786" y="526.6" font-size="5.5" text-anchor="start" textLength="25.9" lengthAdjust="spacingAndGlyphs">DJp-11 300/250</text><text x="786" y="532" font-size="5.5" text-anchor="start" textLength="16.7" lengthAdjust="spacingAndGlyphs">X:Φ14@150</text><text x="786" y="537.4" font-size="5.5" text-anchor="start" textLength="16.7" lengthAdjust="spacingAndGlyphs">Y:Φ14@150</text><text x="832.5" y="525.1" font-size="5.5" text-anchor="start" textLength="25.9" lengthAdjust="spacingAndGlyphs">DJp-12 300/250</text><text x="832.5" y="530.5" font-size="5.5" text-anchor="start" textLength="16.7" lengthAdjust="spacingAndGlyphs">X:Φ16@150</text><text x="832.5" y="535.9" font-size="5.5" text-anchor="start" textLength="16.7" lengthAdjust="spacingAndGlyphs">Y:Φ16@150</text><text x="873" y="525.1" font-size="5.5" text-anchor="start" textLength="20.4" lengthAdjust="spacingAndGlyphs">AL1 300x600</text><text x="873" y="530.5" font-size="5.5" text-anchor="start" textLength="20.4" lengthAdjust="spacingAndGlyphs">4Φ18 Φ8@200</text><text x="873" y="535.9" font-size="5.5" text-anchor="start" textLength="22.2" lengthAdjust="spacingAndGlyphs">B:4Φ18 G4Φ12</text><text x="873" y="541.3" font-size="5.5" text-anchor="start" textLength="14.8" lengthAdjust="spacingAndGlyphs">(-1.000)</text><text x="972.5" y="519.1" font-size="5.5" text-anchor="start" textLength="25.9" lengthAdjust="spacingAndGlyphs">DJp-13 300/250</text><text x="972.5" y="524.5" font-size="5.5" text-anchor="start" textLength="16.7" lengthAdjust="spacingAndGlyphs">X:Φ14@150</text><text x="972.5" y="529.9" font-size="5.5" text-anchor="start" textLength="16.7" lengthAdjust="spacingAndGlyphs">Y:Φ14@150</text><text x="1038" y="521.6" font-size="5.5" text-anchor="start" textLength="25.9" lengthAdjust="spacingAndGlyphs">DJp-14 300/250</text><text x="1038" y="527" font-size="5.5" text-anchor="start" textLength="16.7" lengthAdjust="spacingAndGlyphs">X:Φ14@150</text><text x="1038" y="532.4" font-size="5.5" text-anchor="start" textLength="16.7" lengthAdjust="spacingAndGlyphs">Y:Φ14@150</text><text x="54" y="440" font-size="5.300000000000001" text-anchor="start" textLength="19.5" lengthAdjust="spacingAndGlyphs" transform="rotate(-90 54 440)">AL1 300x600</text><text x="59" y="440" font-size="5.300000000000001" text-anchor="start" textLength="19.5" lengthAdjust="spacingAndGlyphs" transform="rotate(-90 59 440)">4Φ18 Φ8@200</text><text x="64" y="440" font-size="5.300000000000001" text-anchor="start" textLength="21.2" lengthAdjust="spacingAndGlyphs" transform="rotate(-90 64 440)">B:4Φ18 G4Φ12</text><text x="69" y="440" font-size="5.300000000000001" text-anchor="start" textLength="14.2" lengthAdjust="spacingAndGlyphs" transform="rotate(-90 69 440)">(-1.000)</text><text x="216" y="440" font-size="5.300000000000001" text-anchor="start" textLength="19.5" lengthAdjust="spacingAndGlyphs" transform="rotate(-90 216 440)">AL1 300x600</text><text x="221" y="440" font-size="5.300000000000001" text-anchor="start" textLength="19.5" lengthAdjust="spacingAndGlyphs" transform="rotate(-90 221 440)">4Φ18 Φ8@200</text><text x="226" y="440" font-size="5.300000000000001" text-anchor="start" textLength="21.2" lengthAdjust="spacingAndGlyphs" transform="rotate(-90 226 440)">B:4Φ18 G4Φ12</text><text x="231" y="440" font-size="5.300000000000001" text-anchor="start" textLength="14.2" lengthAdjust="spacingAndGlyphs" transform="rotate(-90 231 440)">(-1.000)</text><text x="169.5" y="440" font-size="4.9" text-anchor="start" textLength="4.8" lengthAdjust="spacingAndGlyphs" transform="rotate(-90 169.5 440)">AL1</text><text x="268" y="440" font-size="4.9" text-anchor="start" textLength="4.8" lengthAdjust="spacingAndGlyphs" transform="rotate(-90 268 440)">AL1</text><text x="364" y="440" font-size="4.9" text-anchor="start" textLength="4.8" lengthAdjust="spacingAndGlyphs" transform="rotate(-90 364 440)">AL1</text><text x="460" y="440" font-size="4.9" text-anchor="start" textLength="4.8" lengthAdjust="spacingAndGlyphs" transform="rotate(-90 460 440)">AL1</text><text x="556" y="440" font-size="4.9" text-anchor="start" textLength="4.8" lengthAdjust="spacingAndGlyphs" transform="rotate(-90 556 440)">AL1</text><text x="652" y="440" font-size="4.9" text-anchor="start" textLength="4.8" lengthAdjust="spacingAndGlyphs" transform="rotate(-90 652 440)">AL1</text><text x="747.3" y="440" font-size="4.9" text-anchor="start" textLength="4.8" lengthAdjust="spacingAndGlyphs" transform="rotate(-90 747.3 440)">AL1</text><text x="848.8" y="440" font-size="4.9" text-anchor="start" textLength="4.8" lengthAdjust="spacingAndGlyphs" transform="rotate(-90 848.8 440)">AL1</text><text x="947.5" y="440" font-size="4.9" text-anchor="start" textLength="4.8" lengthAdjust="spacingAndGlyphs" transform="rotate(-90 947.5 440)">AL1</text><text x="1011.7" y="440" font-size="4.9" text-anchor="start" textLength="4.8" lengthAdjust="spacingAndGlyphs" transform="rotate(-90 1011.7 440)">AL1</text><text x="149.2" y="223.5" font-size="5.5" text-anchor="middle" textLength="7.4" lengthAdjust="spacingAndGlyphs">4200</text><text x="149.2" y="625" font-size="5.5" text-anchor="middle" textLength="7.4" lengthAdjust="spacingAndGlyphs">4200</text><text x="230.5" y="223.5" font-size="5.5" text-anchor="middle" textLength="7.4" lengthAdjust="spacingAndGlyphs">6000</text><text x="230.5" y="625" font-size="5.5" text-anchor="middle" textLength="7.4" lengthAdjust="spacingAndGlyphs">6000</text><text x="326.5" y="223.5" font-size="5.5" text-anchor="middle" textLength="7.4" lengthAdjust="spacingAndGlyphs">6000</text><text x="326.5" y="625" font-size="5.5" text-anchor="middle" textLength="7.4" lengthAdjust="spacingAndGlyphs">6000</text><text x="422.5" y="223.5" font-size="5.5" text-anchor="middle" textLength="7.4" lengthAdjust="spacingAndGlyphs">6000</text><text x="422.5" y="625" font-size="5.5" text-anchor="middle" textLength="7.4" lengthAdjust="spacingAndGlyphs">6000</text><text x="518.5" y="223.5" font-size="5.5" text-anchor="middle" textLength="7.4" lengthAdjust="spacingAndGlyphs">6000</text><text x="518.5" y="625" font-size="5.5" text-anchor="middle" textLength="7.4" lengthAdjust="spacingAndGlyphs">6000</text><text x="614.5" y="223.5" font-size="5.5" text-anchor="middle" textLength="7.4" lengthAdjust="spacingAndGlyphs">6000</text><text x="614.5" y="625" font-size="5.5" text-anchor="middle" textLength="7.4" lengthAdjust="spacingAndGlyphs">6000</text><text x="710.5" y="223.5" font-size="5.5" text-anchor="middle" textLength="7.4" lengthAdjust="spacingAndGlyphs">6000</text><text x="710.5" y="625" font-size="5.5" text-anchor="middle" textLength="7.4" lengthAdjust="spacingAndGlyphs">6000</text><text x="809" y="223.5" font-size="5.5" text-anchor="middle" textLength="7.4" lengthAdjust="spacingAndGlyphs">6000</text><text x="809" y="625" font-size="5.5" text-anchor="middle" textLength="7.4" lengthAdjust="spacingAndGlyphs">6000</text><text x="909.9" y="223.5" font-size="5.5" text-anchor="middle" textLength="7.4" lengthAdjust="spacingAndGlyphs">6000</text><text x="909.9" y="625" font-size="5.5" text-anchor="middle" textLength="7.4" lengthAdjust="spacingAndGlyphs">6000</text><text x="993.9" y="223.5" font-size="5.5" text-anchor="middle" textLength="7.4" lengthAdjust="spacingAndGlyphs">4200</text><text x="993.9" y="625" font-size="5.5" text-anchor="middle" textLength="7.4" lengthAdjust="spacingAndGlyphs">4200</text><text x="571" y="213.8" font-size="5.5" text-anchor="middle" textLength="9.2" lengthAdjust="spacingAndGlyphs">56400</text><text x="571" y="636.5" font-size="5.5" text-anchor="middle" textLength="9.2" lengthAdjust="spacingAndGlyphs">56400</text><text x="106.7" y="327.5" font-size="5.300000000000001" text-anchor="middle" textLength="7.1" lengthAdjust="spacingAndGlyphs">1150</text><text x="128.3" y="327.5" font-size="5.300000000000001" text-anchor="middle" textLength="7.1" lengthAdjust="spacingAndGlyphs">1550</text><text x="169.4" y="328.2" font-size="5.300000000000001" text-anchor="middle" textLength="7.1" lengthAdjust="spacingAndGlyphs">1650</text><text x="195.8" y="328.2" font-size="5.300000000000001" text-anchor="middle" textLength="7.1" lengthAdjust="spacingAndGlyphs">1650</text><text x="265.9" y="328.5" font-size="5.300000000000001" text-anchor="middle" textLength="7.1" lengthAdjust="spacingAndGlyphs">1575</text><text x="291.4" y="328.5" font-size="5.300000000000001" text-anchor="middle" textLength="7.1" lengthAdjust="spacingAndGlyphs">1575</text><text x="361.9" y="328.5" font-size="5.300000000000001" text-anchor="middle" textLength="7.1" lengthAdjust="spacingAndGlyphs">1575</text><text x="387.4" y="328.5" font-size="5.300000000000001" text-anchor="middle" textLength="7.1" lengthAdjust="spacingAndGlyphs">1575</text><text x="457.9" y="328.5" font-size="5.300000000000001" text-anchor="middle" textLength="7.1" lengthAdjust="spacingAndGlyphs">1575</text><text x="483.4" y="328.5" font-size="5.300000000000001" text-anchor="middle" textLength="7.1" lengthAdjust="spacingAndGlyphs">1575</text><text x="553.9" y="328.5" font-size="5.300000000000001" text-anchor="middle" textLength="7.1" lengthAdjust="spacingAndGlyphs">1575</text><text x="579.4" y="328.5" font-size="5.300000000000001" text-anchor="middle" textLength="7.1" lengthAdjust="spacingAndGlyphs">1575</text><text x="649.9" y="328.5" font-size="5.300000000000001" text-anchor="middle" textLength="7.1" lengthAdjust="spacingAndGlyphs">1575</text><text x="675.4" y="328.5" font-size="5.300000000000001" text-anchor="middle" textLength="7.1" lengthAdjust="spacingAndGlyphs">1575</text><text x="745.9" y="328.5" font-size="5.300000000000001" text-anchor="middle" textLength="7.1" lengthAdjust="spacingAndGlyphs">1575</text><text x="771.4" y="328.5" font-size="5.300000000000001" text-anchor="middle" textLength="7.1" lengthAdjust="spacingAndGlyphs">1575</text><text x="846.9" y="328.5" font-size="5.300000000000001" text-anchor="middle" textLength="7.1" lengthAdjust="spacingAndGlyphs">1575</text><text x="872.4" y="328.5" font-size="5.300000000000001" text-anchor="middle" textLength="7.1" lengthAdjust="spacingAndGlyphs">1575</text><text x="946.6" y="330" font-size="5.300000000000001" text-anchor="middle" textLength="7.1" lengthAdjust="spacingAndGlyphs">1650</text><text x="973.8" y="330" font-size="5.300000000000001" text-anchor="middle" textLength="7.1" lengthAdjust="spacingAndGlyphs">1650</text><text x="1015.1" y="328" font-size="5.300000000000001" text-anchor="middle" textLength="7.1" lengthAdjust="spacingAndGlyphs">1550</text><text x="1037.1" y="328" font-size="5.300000000000001" text-anchor="middle" textLength="7.1" lengthAdjust="spacingAndGlyphs">1150</text><text x="107.7" y="486.8" font-size="5.300000000000001" text-anchor="middle" textLength="7.1" lengthAdjust="spacingAndGlyphs">1000</text><text x="127.2" y="486.8" font-size="5.300000000000001" text-anchor="middle" textLength="7.1" lengthAdjust="spacingAndGlyphs">1400</text><text x="170.1" y="486.5" font-size="5.300000000000001" text-anchor="middle" textLength="7.1" lengthAdjust="spacingAndGlyphs">1550</text><text x="195.4" y="486.5" font-size="5.300000000000001" text-anchor="middle" textLength="7.1" lengthAdjust="spacingAndGlyphs">1550</text><text x="267.1" y="487.5" font-size="5.300000000000001" text-anchor="middle" textLength="7.1" lengthAdjust="spacingAndGlyphs">1450</text><text x="290.1" y="487.5" font-size="5.300000000000001" text-anchor="middle" textLength="7.1" lengthAdjust="spacingAndGlyphs">1450</text><text x="363.1" y="487.5" font-size="5.300000000000001" text-anchor="middle" textLength="7.1" lengthAdjust="spacingAndGlyphs">1450</text><text x="386.1" y="487.5" font-size="5.300000000000001" text-anchor="middle" textLength="7.1" lengthAdjust="spacingAndGlyphs">1450</text><text x="459.1" y="487.5" font-size="5.300000000000001" text-anchor="middle" textLength="7.1" lengthAdjust="spacingAndGlyphs">1450</text><text x="482.1" y="487.5" font-size="5.300000000000001" text-anchor="middle" textLength="7.1" lengthAdjust="spacingAndGlyphs">1450</text><text x="555.1" y="487.5" font-size="5.300000000000001" text-anchor="middle" textLength="7.1" lengthAdjust="spacingAndGlyphs">1450</text><text x="578.1" y="487.5" font-size="5.300000000000001" text-anchor="middle" textLength="7.1" lengthAdjust="spacingAndGlyphs">1450</text><text x="651.1" y="487.5" font-size="5.300000000000001" text-anchor="middle" textLength="7.1" lengthAdjust="spacingAndGlyphs">1450</text><text x="674.1" y="487.5" font-size="5.300000000000001" text-anchor="middle" textLength="7.1" lengthAdjust="spacingAndGlyphs">1450</text><text x="746.5" y="491" font-size="5.300000000000001" text-anchor="middle" textLength="7.1" lengthAdjust="spacingAndGlyphs">1500</text><text x="770.5" y="491" font-size="5.300000000000001" text-anchor="middle" textLength="7.1" lengthAdjust="spacingAndGlyphs">1500</text><text x="847.5" y="491" font-size="5.300000000000001" text-anchor="middle" textLength="7.1" lengthAdjust="spacingAndGlyphs">1500</text><text x="871.8" y="491" font-size="5.300000000000001" text-anchor="middle" textLength="7.1" lengthAdjust="spacingAndGlyphs">1500</text><text x="947.2" y="491.5" font-size="5.300000000000001" text-anchor="middle" textLength="7.1" lengthAdjust="spacingAndGlyphs">1650</text><text x="973.3" y="491.5" font-size="5.300000000000001" text-anchor="middle" textLength="7.1" lengthAdjust="spacingAndGlyphs">1650</text><text x="1016" y="481.2" font-size="5.300000000000001" text-anchor="middle" textLength="7.1" lengthAdjust="spacingAndGlyphs">1400</text><text x="1036" y="481.2" font-size="5.300000000000001" text-anchor="middle" textLength="7.1" lengthAdjust="spacingAndGlyphs">1000</text><text x="106.7" y="599.5" font-size="5.300000000000001" text-anchor="middle" textLength="7.1" lengthAdjust="spacingAndGlyphs">1150</text><text x="127.8" y="599.5" font-size="5.300000000000001" text-anchor="middle" textLength="7.1" lengthAdjust="spacingAndGlyphs">1500</text><text x="170" y="602.3" font-size="5.300000000000001" text-anchor="middle" textLength="7.1" lengthAdjust="spacingAndGlyphs">1550</text><text x="195.4" y="602.3" font-size="5.300000000000001" text-anchor="middle" textLength="7.1" lengthAdjust="spacingAndGlyphs">1600</text><text x="265.9" y="602.8" font-size="5.300000000000001" text-anchor="middle" textLength="7.1" lengthAdjust="spacingAndGlyphs">1550</text><text x="291.4" y="602.8" font-size="5.300000000000001" text-anchor="middle" textLength="7.1" lengthAdjust="spacingAndGlyphs">1550</text><text x="361.9" y="602.8" font-size="5.300000000000001" text-anchor="middle" textLength="7.1" lengthAdjust="spacingAndGlyphs">1550</text><text x="387.4" y="602.8" font-size="5.300000000000001" text-anchor="middle" textLength="7.1" lengthAdjust="spacingAndGlyphs">1550</text><text x="457.9" y="602.8" font-size="5.300000000000001" text-anchor="middle" textLength="7.1" lengthAdjust="spacingAndGlyphs">1550</text><text x="483.4" y="602.8" font-size="5.300000000000001" text-anchor="middle" textLength="7.1" lengthAdjust="spacingAndGlyphs">1550</text><text x="553.9" y="602.8" font-size="5.300000000000001" text-anchor="middle" textLength="7.1" lengthAdjust="spacingAndGlyphs">1550</text><text x="579.4" y="602.8" font-size="5.300000000000001" text-anchor="middle" textLength="7.1" lengthAdjust="spacingAndGlyphs">1550</text><text x="649.9" y="602.8" font-size="5.300000000000001" text-anchor="middle" textLength="7.1" lengthAdjust="spacingAndGlyphs">1550</text><text x="675.4" y="602.8" font-size="5.300000000000001" text-anchor="middle" textLength="7.1" lengthAdjust="spacingAndGlyphs">1550</text><text x="746.9" y="617.8" font-size="5.300000000000001" text-anchor="middle" textLength="7.1" lengthAdjust="spacingAndGlyphs">1450</text><text x="779.1" y="617.8" font-size="5.300000000000001" text-anchor="middle" textLength="7.1" lengthAdjust="spacingAndGlyphs">2550</text><text x="844.9" y="611.4" font-size="5.300000000000001" text-anchor="middle" textLength="7.1" lengthAdjust="spacingAndGlyphs">1800</text><text x="892.2" y="611.4" font-size="5.300000000000001" text-anchor="middle" textLength="7.1" lengthAdjust="spacingAndGlyphs">4050</text><text x="946.8" y="607.8" font-size="5.300000000000001" text-anchor="middle" textLength="7.1" lengthAdjust="spacingAndGlyphs">1650</text><text x="973.8" y="607.8" font-size="5.300000000000001" text-anchor="middle" textLength="7.1" lengthAdjust="spacingAndGlyphs">1650</text><text x="1013.5" y="612.5" font-size="5.300000000000001" text-anchor="middle" textLength="7.1" lengthAdjust="spacingAndGlyphs">1700</text><text x="1038.7" y="612.5" font-size="5.300000000000001" text-anchor="middle" textLength="7.1" lengthAdjust="spacingAndGlyphs">1400</text><text x="84.5" y="279.8" font-size="5.300000000000001" text-anchor="middle" textLength="7.1" lengthAdjust="spacingAndGlyphs" transform="rotate(-90 84.5 279.8)">1150</text><text x="84.5" y="304.8" font-size="5.300000000000001" text-anchor="middle" textLength="7.1" lengthAdjust="spacingAndGlyphs" transform="rotate(-90 84.5 304.8)">1950</text><text x="146.5" y="277.2" font-size="5.300000000000001" text-anchor="middle" textLength="7.1" lengthAdjust="spacingAndGlyphs" transform="rotate(-90 146.5 277.2)">1450</text><text x="146.5" y="304.9" font-size="5.300000000000001" text-anchor="middle" textLength="7.1" lengthAdjust="spacingAndGlyphs" transform="rotate(-90 146.5 304.9)">1950</text><text x="239" y="277.8" font-size="5.300000000000001" text-anchor="middle" textLength="7.1" lengthAdjust="spacingAndGlyphs" transform="rotate(-90 239 277.8)">1400</text><text x="239" y="302.9" font-size="5.300000000000001" text-anchor="middle" textLength="7.1" lengthAdjust="spacingAndGlyphs" transform="rotate(-90 239 302.9)">1700</text><text x="335" y="277.8" font-size="5.300000000000001" text-anchor="middle" textLength="7.1" lengthAdjust="spacingAndGlyphs" transform="rotate(-90 335 277.8)">1400</text><text x="335" y="302.9" font-size="5.300000000000001" text-anchor="middle" textLength="7.1" lengthAdjust="spacingAndGlyphs" transform="rotate(-90 335 302.9)">1700</text><text x="431" y="277.8" font-size="5.300000000000001" text-anchor="middle" textLength="7.1" lengthAdjust="spacingAndGlyphs" transform="rotate(-90 431 277.8)">1400</text><text x="431" y="302.9" font-size="5.300000000000001" text-anchor="middle" textLength="7.1" lengthAdjust="spacingAndGlyphs" transform="rotate(-90 431 302.9)">1700</text><text x="527" y="277.8" font-size="5.300000000000001" text-anchor="middle" textLength="7.1" lengthAdjust="spacingAndGlyphs" transform="rotate(-90 527 277.8)">1400</text><text x="527" y="302.9" font-size="5.300000000000001" text-anchor="middle" textLength="7.1" lengthAdjust="spacingAndGlyphs" transform="rotate(-90 527 302.9)">1700</text><text x="623" y="277.8" font-size="5.300000000000001" text-anchor="middle" textLength="7.1" lengthAdjust="spacingAndGlyphs" transform="rotate(-90 623 277.8)">1400</text><text x="623" y="302.9" font-size="5.300000000000001" text-anchor="middle" textLength="7.1" lengthAdjust="spacingAndGlyphs" transform="rotate(-90 623 302.9)">1700</text><text x="719" y="277.8" font-size="5.300000000000001" text-anchor="middle" textLength="7.1" lengthAdjust="spacingAndGlyphs" transform="rotate(-90 719 277.8)">1400</text><text x="719" y="302.9" font-size="5.300000000000001" text-anchor="middle" textLength="7.1" lengthAdjust="spacingAndGlyphs" transform="rotate(-90 719 302.9)">1700</text><text x="820" y="277.8" font-size="5.300000000000001" text-anchor="middle" textLength="7.1" lengthAdjust="spacingAndGlyphs" transform="rotate(-90 820 277.8)">1400</text><text x="820" y="302.9" font-size="5.300000000000001" text-anchor="middle" textLength="7.1" lengthAdjust="spacingAndGlyphs" transform="rotate(-90 820 302.9)">1700</text><text x="920.5" y="277.2" font-size="5.300000000000001" text-anchor="middle" textLength="7.1" lengthAdjust="spacingAndGlyphs" transform="rotate(-90 920.5 277.2)">1450</text><text x="920.5" y="304.8" font-size="5.300000000000001" text-anchor="middle" textLength="7.1" lengthAdjust="spacingAndGlyphs" transform="rotate(-90 920.5 304.8)">1950</text><text x="1058.5" y="279.8" font-size="5.300000000000001" text-anchor="middle" textLength="7.1" lengthAdjust="spacingAndGlyphs" transform="rotate(-90 1058.5 279.8)">1150</text><text x="1058.5" y="304.8" font-size="5.300000000000001" text-anchor="middle" textLength="7.1" lengthAdjust="spacingAndGlyphs" transform="rotate(-90 1058.5 304.8)">1950</text><text x="87" y="395.2" font-size="5.300000000000001" text-anchor="middle" textLength="7.1" lengthAdjust="spacingAndGlyphs" transform="rotate(-90 87 395.2)">1550</text><text x="87" y="429" font-size="5.300000000000001" text-anchor="middle" textLength="7.1" lengthAdjust="spacingAndGlyphs" transform="rotate(-90 87 429)">2700</text><text x="87" y="460.2" font-size="5.300000000000001" text-anchor="middle" textLength="7.1" lengthAdjust="spacingAndGlyphs" transform="rotate(-90 87 460.2)">1650</text><text x="146.8" y="393.4" font-size="5.300000000000001" text-anchor="middle" textLength="7.1" lengthAdjust="spacingAndGlyphs" transform="rotate(-90 146.8 393.4)">1550</text><text x="146.8" y="429" font-size="5.300000000000001" text-anchor="middle" textLength="7.1" lengthAdjust="spacingAndGlyphs" transform="rotate(-90 146.8 429)">2700</text><text x="146.8" y="463.6" font-size="5.300000000000001" text-anchor="middle" textLength="7.1" lengthAdjust="spacingAndGlyphs" transform="rotate(-90 146.8 463.6)">1650</text><text x="717.9" y="395" font-size="5.300000000000001" text-anchor="middle" textLength="7.1" lengthAdjust="spacingAndGlyphs" transform="rotate(-90 717.9 395)">1550</text><text x="717.9" y="429" font-size="5.300000000000001" text-anchor="middle" textLength="7.1" lengthAdjust="spacingAndGlyphs" transform="rotate(-90 717.9 429)">2700</text><text x="717.9" y="464.4" font-size="5.300000000000001" text-anchor="middle" textLength="7.1" lengthAdjust="spacingAndGlyphs" transform="rotate(-90 717.9 464.4)">1650</text><text x="818.5" y="395" font-size="5.300000000000001" text-anchor="middle" textLength="7.1" lengthAdjust="spacingAndGlyphs" transform="rotate(-90 818.5 395)">1550</text><text x="818.5" y="429" font-size="5.300000000000001" text-anchor="middle" textLength="7.1" lengthAdjust="spacingAndGlyphs" transform="rotate(-90 818.5 429)">2700</text><text x="818.5" y="464.4" font-size="5.300000000000001" text-anchor="middle" textLength="7.1" lengthAdjust="spacingAndGlyphs" transform="rotate(-90 818.5 464.4)">1650</text><text x="917.5" y="393.1" font-size="5.300000000000001" text-anchor="middle" textLength="7.1" lengthAdjust="spacingAndGlyphs" transform="rotate(-90 917.5 393.1)">1550</text><text x="917.5" y="429" font-size="5.300000000000001" text-anchor="middle" textLength="7.1" lengthAdjust="spacingAndGlyphs" transform="rotate(-90 917.5 429)">2700</text><text x="917.5" y="464.8" font-size="5.300000000000001" text-anchor="middle" textLength="7.1" lengthAdjust="spacingAndGlyphs" transform="rotate(-90 917.5 464.8)">1650</text><text x="994.1" y="394.7" font-size="5.300000000000001" text-anchor="middle" textLength="7.1" lengthAdjust="spacingAndGlyphs" transform="rotate(-90 994.1 394.7)">1550</text><text x="994.1" y="429" font-size="5.300000000000001" text-anchor="middle" textLength="7.1" lengthAdjust="spacingAndGlyphs" transform="rotate(-90 994.1 429)">2700</text><text x="994.1" y="459.8" font-size="5.300000000000001" text-anchor="middle" textLength="7.1" lengthAdjust="spacingAndGlyphs" transform="rotate(-90 994.1 459.8)">1650</text><text x="238.3" y="395" font-size="5.300000000000001" text-anchor="middle" textLength="7.1" lengthAdjust="spacingAndGlyphs" transform="rotate(-90 238.3 395)">1550</text><text x="238.3" y="429" font-size="5.300000000000001" text-anchor="middle" textLength="7.1" lengthAdjust="spacingAndGlyphs" transform="rotate(-90 238.3 429)">2700</text><text x="238.3" y="463.6" font-size="5.300000000000001" text-anchor="middle" textLength="7.1" lengthAdjust="spacingAndGlyphs" transform="rotate(-90 238.3 463.6)">1650</text><text x="334.3" y="395" font-size="5.300000000000001" text-anchor="middle" textLength="7.1" lengthAdjust="spacingAndGlyphs" transform="rotate(-90 334.3 395)">1550</text><text x="334.3" y="429" font-size="5.300000000000001" text-anchor="middle" textLength="7.1" lengthAdjust="spacingAndGlyphs" transform="rotate(-90 334.3 429)">2700</text><text x="334.3" y="463.6" font-size="5.300000000000001" text-anchor="middle" textLength="7.1" lengthAdjust="spacingAndGlyphs" transform="rotate(-90 334.3 463.6)">1650</text><text x="430.3" y="395" font-size="5.300000000000001" text-anchor="middle" textLength="7.1" lengthAdjust="spacingAndGlyphs" transform="rotate(-90 430.3 395)">1550</text><text x="430.3" y="429" font-size="5.300000000000001" text-anchor="middle" textLength="7.1" lengthAdjust="spacingAndGlyphs" transform="rotate(-90 430.3 429)">2700</text><text x="430.3" y="463.6" font-size="5.300000000000001" text-anchor="middle" textLength="7.1" lengthAdjust="spacingAndGlyphs" transform="rotate(-90 430.3 463.6)">1650</text><text x="526.3" y="395" font-size="5.300000000000001" text-anchor="middle" textLength="7.1" lengthAdjust="spacingAndGlyphs" transform="rotate(-90 526.3 395)">1550</text><text x="526.3" y="429" font-size="5.300000000000001" text-anchor="middle" textLength="7.1" lengthAdjust="spacingAndGlyphs" transform="rotate(-90 526.3 429)">2700</text><text x="526.3" y="463.6" font-size="5.300000000000001" text-anchor="middle" textLength="7.1" lengthAdjust="spacingAndGlyphs" transform="rotate(-90 526.3 463.6)">1650</text><text x="622.3" y="395" font-size="5.300000000000001" text-anchor="middle" textLength="7.1" lengthAdjust="spacingAndGlyphs" transform="rotate(-90 622.3 395)">1550</text><text x="622.3" y="429" font-size="5.300000000000001" text-anchor="middle" textLength="7.1" lengthAdjust="spacingAndGlyphs" transform="rotate(-90 622.3 429)">2700</text><text x="622.3" y="463.6" font-size="5.300000000000001" text-anchor="middle" textLength="7.1" lengthAdjust="spacingAndGlyphs" transform="rotate(-90 622.3 463.6)">1650</text><text x="84" y="557.1" font-size="5.300000000000001" text-anchor="middle" textLength="7.1" lengthAdjust="spacingAndGlyphs" transform="rotate(-90 84 557.1)">1400</text><text x="84" y="578.2" font-size="5.300000000000001" text-anchor="middle" textLength="7.1" lengthAdjust="spacingAndGlyphs" transform="rotate(-90 84 578.2)">1200</text><text x="146.8" y="555.1" font-size="5.300000000000001" text-anchor="middle" textLength="7.1" lengthAdjust="spacingAndGlyphs" transform="rotate(-90 146.8 555.1)">1400</text><text x="146.8" y="580.2" font-size="5.300000000000001" text-anchor="middle" textLength="7.1" lengthAdjust="spacingAndGlyphs" transform="rotate(-90 146.8 580.2)">1200</text><text x="716.9" y="556.2" font-size="5.300000000000001" text-anchor="middle" textLength="7.1" lengthAdjust="spacingAndGlyphs" transform="rotate(-90 716.9 556.2)">1400</text><text x="716.9" y="584.1" font-size="5.300000000000001" text-anchor="middle" textLength="7.1" lengthAdjust="spacingAndGlyphs" transform="rotate(-90 716.9 584.1)">1200</text><text x="816" y="556.6" font-size="5.300000000000001" text-anchor="middle" textLength="7.1" lengthAdjust="spacingAndGlyphs" transform="rotate(-90 816 556.6)">1400</text><text x="816" y="584.6" font-size="5.300000000000001" text-anchor="middle" textLength="7.1" lengthAdjust="spacingAndGlyphs" transform="rotate(-90 816 584.6)">1200</text><text x="239.5" y="555.5" font-size="5.300000000000001" text-anchor="middle" textLength="7.1" lengthAdjust="spacingAndGlyphs" transform="rotate(-90 239.5 555.5)">1650</text><text x="239.5" y="580.2" font-size="5.300000000000001" text-anchor="middle" textLength="7.1" lengthAdjust="spacingAndGlyphs" transform="rotate(-90 239.5 580.2)">1400</text><text x="335.5" y="555.5" font-size="5.300000000000001" text-anchor="middle" textLength="7.1" lengthAdjust="spacingAndGlyphs" transform="rotate(-90 335.5 555.5)">1650</text><text x="335.5" y="580.2" font-size="5.300000000000001" text-anchor="middle" textLength="7.1" lengthAdjust="spacingAndGlyphs" transform="rotate(-90 335.5 580.2)">1400</text><text x="431.5" y="555.5" font-size="5.300000000000001" text-anchor="middle" textLength="7.1" lengthAdjust="spacingAndGlyphs" transform="rotate(-90 431.5 555.5)">1650</text><text x="431.5" y="580.2" font-size="5.300000000000001" text-anchor="middle" textLength="7.1" lengthAdjust="spacingAndGlyphs" transform="rotate(-90 431.5 580.2)">1400</text><text x="527.5" y="555.5" font-size="5.300000000000001" text-anchor="middle" textLength="7.1" lengthAdjust="spacingAndGlyphs" transform="rotate(-90 527.5 555.5)">1650</text><text x="527.5" y="580.2" font-size="5.300000000000001" text-anchor="middle" textLength="7.1" lengthAdjust="spacingAndGlyphs" transform="rotate(-90 527.5 580.2)">1400</text><text x="623.5" y="555.5" font-size="5.300000000000001" text-anchor="middle" textLength="7.1" lengthAdjust="spacingAndGlyphs" transform="rotate(-90 623.5 555.5)">1650</text><text x="623.5" y="580.2" font-size="5.300000000000001" text-anchor="middle" textLength="7.1" lengthAdjust="spacingAndGlyphs" transform="rotate(-90 623.5 580.2)">1400</text><text x="1001" y="554.2" font-size="5.300000000000001" text-anchor="middle" textLength="7.1" lengthAdjust="spacingAndGlyphs" transform="rotate(-90 1001 554.2)">1750</text><text x="1001" y="580.6" font-size="5.300000000000001" text-anchor="middle" textLength="7.1" lengthAdjust="spacingAndGlyphs" transform="rotate(-90 1001 580.6)">1450</text><text x="1062.5" y="555.6" font-size="5.300000000000001" text-anchor="middle" textLength="7.1" lengthAdjust="spacingAndGlyphs" transform="rotate(-90 1062.5 555.6)">1600</text><text x="1062.5" y="584.2" font-size="5.300000000000001" text-anchor="middle" textLength="7.1" lengthAdjust="spacingAndGlyphs" transform="rotate(-90 1062.5 584.2)">1900</text><text x="30.8" y="429" font-size="5.300000000000001" text-anchor="middle" textLength="8.8" lengthAdjust="spacingAndGlyphs" transform="rotate(-90 30.8 429)">17100</text><text x="41.8" y="429" font-size="5.300000000000001" text-anchor="middle" textLength="7.1" lengthAdjust="spacingAndGlyphs" transform="rotate(-90 41.8 429)">2700</text><text x="41.8" y="348.4" font-size="5.300000000000001" text-anchor="middle" textLength="7.1" lengthAdjust="spacingAndGlyphs" transform="rotate(-90 41.8 348.4)">7200</text><text x="41.8" y="509.5" font-size="5.300000000000001" text-anchor="middle" textLength="7.1" lengthAdjust="spacingAndGlyphs" transform="rotate(-90 41.8 509.5)">7200</text><text x="1095" y="429" font-size="5.300000000000001" text-anchor="middle" textLength="7.1" lengthAdjust="spacingAndGlyphs" transform="rotate(-90 1095 429)">2700</text><text x="1104.9" y="429" font-size="5.300000000000001" text-anchor="middle" textLength="8.8" lengthAdjust="spacingAndGlyphs" transform="rotate(-90 1104.9 429)">17100</text><text x="1095" y="348.4" font-size="5.300000000000001" text-anchor="middle" textLength="7.1" lengthAdjust="spacingAndGlyphs" transform="rotate(-90 1095 348.4)">7200</text><text x="1095" y="509.5" font-size="5.300000000000001" text-anchor="middle" textLength="7.1" lengthAdjust="spacingAndGlyphs" transform="rotate(-90 1095 509.5)">7200</text><text x="232" y="285.5" font-size="4.5" text-anchor="start" textLength="4.3" lengthAdjust="spacingAndGlyphs">GZ1</text><text x="315.5" y="285.5" font-size="4.5" text-anchor="start" textLength="4.3" lengthAdjust="spacingAndGlyphs">GZ1</text><text x="423" y="285.5" font-size="4.5" text-anchor="start" textLength="4.3" lengthAdjust="spacingAndGlyphs">GZ1</text><text x="508" y="285.5" font-size="4.5" text-anchor="start" textLength="4.3" lengthAdjust="spacingAndGlyphs">GZ1</text><text x="615.5" y="285.5" font-size="4.5" text-anchor="start" textLength="4.3" lengthAdjust="spacingAndGlyphs">GZ1</text><text x="700" y="285.5" font-size="4.5" text-anchor="start" textLength="4.3" lengthAdjust="spacingAndGlyphs">GZ1</text><text x="807.5" y="285.5" font-size="4.5" text-anchor="start" textLength="4.3" lengthAdjust="spacingAndGlyphs">GZ1</text><text x="898" y="285.5" font-size="4.5" text-anchor="start" textLength="4.3" lengthAdjust="spacingAndGlyphs">GZ1</text><text x="232" y="566.5" font-size="4.5" text-anchor="start" textLength="4.3" lengthAdjust="spacingAndGlyphs">GZ1</text><text x="315.5" y="566.5" font-size="4.5" text-anchor="start" textLength="4.3" lengthAdjust="spacingAndGlyphs">GZ1</text><text x="508" y="566.5" font-size="4.5" text-anchor="start" textLength="4.3" lengthAdjust="spacingAndGlyphs">GZ1</text></g>
</svg>
<div id="side" class="abs">
<svg width="0" height="0" style="position:absolute"><defs>
<g id="micoff"><rect x="4" y="0.500" width="5.400" height="9" rx="2.700" fill="#f2f2f2"/><path d="M1.700 6.500c0 3.200 2.200 5 5 5s5-1.800 5-5M6.700 11.500v2.500" fill="none" stroke="#f2f2f2" stroke-width="1.700"/><path d="M0.500 13.500L12.500 1" stroke="#ff3b3b" stroke-width="1.500"/></g>
<g id="micon"><rect x="3.700" y="0.300" width="6" height="9.400" rx="3" fill="#f4f4f4"/><path d="M1.300 6.300c0 3.300 2.400 5.300 5.400 5.300s5.400-2 5.400-5.300M6.700 11.500v1.900" fill="none" stroke="#f4f4f4" stroke-width="1.900"/></g>
</defs></svg>
<div class="tile" style="top:23px;border:2px solid #fff"><div class="av" style="left:73px;top:21px">赵玥</div>
<div class="nb" style="left:0;top:92px"><svg style="left:1px;top:4px" width="16" height="15" viewBox="0 0 16 15"><rect x="0" y="0" width="14.500" height="10.500" rx="2.200" fill="#f4f4f4"/><rect x="3" y="12.500" width="8.500" height="1.700" fill="#f4f4f4"/><path d="M4 8.200c.3-2.600 2-3.800 4.300-3.800V2.600l3.400 2.900-3.400 2.900V6.600C6.500 6.500 5 7 4 8.200z" fill="#17181b"/></svg>
<svg style="left:21px;top:4px" width="14" height="15" viewBox="0 0 14 15"><rect x="3.700" y="0.600" width="6" height="9" rx="3" fill="#49e047" stroke="#f4f4f4" stroke-width="1.100"/><path d="M1.300 6.300c0 3.300 2.400 5.300 5.400 5.300s5.400-2 5.400-5.300M6.700 11.500v1.900" fill="none" stroke="#f4f4f4" stroke-width="1.900"/></svg>
<span class="n" style="left:40px;font-size:11px">2-赵玥的屏幕共享</span></div></div>
<div class="tile" style="top:141px"><div class="av" style="left:75px;top:23px;background:linear-gradient(180deg,#b3b8ea 0,#c3c4ee 25%,#d2cbea 35%,#a4abde 41%,#8294d3 49%,#6c80c6 61%,#3c5cae 63.500%,#2d4c98 73%,#1c2f3a 75.500%,#233a33 85%,#c6a88e 88%,#c6a88e 90%,#3a68c6 92%,#2f5cc0 100%)"><i style="position:absolute;left:30px;top:13px;width:34px;height:12px;border-radius:50%;background:#dcd3ec;opacity:.8;filter:blur(2.500px)"></i><i style="position:absolute;left:-4px;top:19px;width:30px;height:8px;border-radius:50%;background:#8f9bd6;opacity:.8;filter:blur(2px)"></i></div>
<div class="nb"><svg style="left:6px;top:4px" width="14" height="15" viewBox="0 0 14 15"><use href="#micoff"/></svg><span class="n" style="left:24px;font-size:11px">申建红</span></div></div>
<div class="tile" style="top:259px"><div class="av">传联</div>
<div class="nb"><div class="badge" style="left:1px;width:48px;background:#f5a623">主持人</div><svg style="left:56px;top:4px" width="14" height="15" viewBox="0 0 14 15"><use href="#micon"/></svg><span class="n" style="left:73px;font-size:11px">陈传联</span></div></div>
<div class="tile" style="top:377px"><div class="av">晓冬</div>
<div class="nb"><div class="badge" style="left:1px;width:72px;background:#0bd07d">联席主持人</div><svg style="left:80px;top:4px" width="14" height="15" viewBox="0 0 14 15"><use href="#micoff"/></svg><span class="n" style="left:98px;font-size:11px">李晓冬</span></div></div>
<div class="tile" style="top:495px"><div class="av" style="background:#aaa6a5"><svg style="left:0;top:0" width="59" height="59" viewBox="1227 584 59 59"><defs><linearGradient id="sky5" x1="0" y1="0" x2="0" y2="1"><stop offset="0" stop-color="#8f8c8d"/><stop offset=".35" stop-color="#b8b4b2"/><stop offset="1" stop-color="#a9a5a6"/></linearGradient></defs><rect x="1227" y="584" width="59" height="59" fill="url(#sky5)"/><path d="M1227 615l4 1 3-2 3 2.500 4-1.500 3 2 4-1 3 1.500 2-1 1.500-6.500 2-1.500 2-3 3 .5 2-2.500 3 .5 2-2 3-.5 2-2 3 0 2.500-2 3 .5 4-1.500V643h-59z" fill="#141213"/><path d="M1227 626c8-3 16-4 24-1s10 9 8 18h-32z" fill="#2b2426" opacity=".55"/></svg></div>
<div class="nb"><svg style="left:6px;top:4px" width="14" height="15" viewBox="0 0 14 15"><use href="#micoff"/></svg><span class="n" style="left:24px;font-size:11px">胡文辉</span></div></div>
<div class="abs" style="left:54px;top:583px;width:110px;height:17px;background:#17181a;opacity:.96"></div>
<svg style="left:102px;top:594px" width="16" height="10" viewBox="0 0 16 10"><path d="M2 1.500l6 6 6-6" fill="none" stroke="#f0f0f0" stroke-width="1.500"/></svg>
</div>
<svg style="left:1132px;top:377px" width="12" height="14" viewBox="0 0 12 14"><path d="M4 1.500L10.300 7 4 12.500" fill="none" stroke="#f0f0f0" stroke-width="1.500"/></svg>
<div class="abs" style="left:1145px;top:364px;width:2px;height:40px;background:#8c8c8c"></div>
<div id="toolbar" class="abs">
<div class="abs" style="left:323px;top:4px;width:56px;height:54px;border-radius:6px 0 0 6px;background:#e6e7ea"></div>
<div class="tb" style="left:337px;width:28px"><svg style="left:0;top:8px" width="28" height="30" viewBox="0 0 28 30"><rect x="9.500" y="2" width="9" height="16" rx="4.500" fill="#5f6269"/><path d="M5.500 13c0 5.200 3.600 8.500 8.500 8.500s8.500-3.300 8.500-8.500M14 21.500v4.500M8.500 26.500h11" fill="none" stroke="#5f6269" stroke-width="1.900"/><path d="M4.600 26.100L25.600 4.600" stroke="#fbfbfc" stroke-width="1.500"/><path d="M3.500 25L24.500 3.500" stroke="#ff5b5b" stroke-width="1.700"/></svg><span>解除静音</span></div>
<svg style="left:380px;top:21px" width="10" height="7" viewBox="0 0 10 7"><path d="M1 6L5 1l4 5z" fill="#55585e"/></svg>
<div class="tb" style="left:403px;width:32px"><svg style="left:0;top:10px" width="32" height="26" viewBox="0 0 32 26"><rect x="1.500" y="3.500" width="20" height="18" rx="1.500" fill="#5f6269"/><path d="M23 10l7.500-5.500v16L23 15z" fill="#5f6269"/><path d="M2.100 24.600L23.600 2.100" stroke="#fbfbfc" stroke-width="1.500"/><path d="M1 23.500L22.500 1" stroke="#ff5b5b" stroke-width="1.700"/></svg><span>开启视频</span></div>
<svg style="left:448px;top:21px" width="10" height="7" viewBox="0 0 10 7"><path d="M1 6L5 1l4 5z" fill="#55585e"/></svg>
<div class="tb" style="left:479px;width:28px"><svg style="left:0;top:10px" width="28" height="26" viewBox="0 0 28 26"><rect x="1" y="2" width="26" height="17" rx="1.500" fill="#5f6269"/><rect x="6.500" y="21.500" width="15" height="2" fill="#5f6269"/><path d="M9.500 14.500c.6-3.800 2.900-5.500 6.300-5.600V6.200l5 4.300-5 4.300v-2.800c-2.600-.1-4.700.5-6.300 2.500z" fill="#fbfbfc"/></svg><span>共享屏幕</span></div>
<div class="tb" style="left:546px;width:30px"><svg style="left:0;top:9px" width="34" height="28" viewBox="546 675 34 28"><circle cx="561" cy="681.900" r="5.200" fill="#5f6269"/><path d="M549 700.500c.4-6.800 4.600-11.200 11.600-11.200 3.400 0 6 .9 8 2.600a7.500 7.500 0 0 0-4.600 8.600z" fill="#5f6269"/><circle cx="571" cy="695.100" r="6.300" fill="#5f6269" stroke="#fbfbfc" stroke-width="1.300"/><path d="M571 691.800v6.600M567.700 695.100h6.600" stroke="#fbfbfc" stroke-width="1.500"/></svg><span>邀请</span></div>
<div class="tb" style="left:614px;width:30px"><svg style="left:0;top:9px" width="32" height="28" viewBox="614 675 32 28"><circle cx="630.800" cy="683" r="5.200" fill="#5f6269"/><path d="M632 689.800c6.300.3 10.200 4.800 10.700 11.900h-4.500c-.5-4.900-2.600-9.200-6.200-11.900z" fill="#5f6269"/><circle cx="626.600" cy="682.600" r="5.700" fill="#5f6269" stroke="#fbfbfc" stroke-width="1.100"/><path d="M614.600 702.200c.5-7.800 4.800-12.700 12-12.700s11.500 4.900 12 12.700z" fill="#5f6269" stroke="#fbfbfc" stroke-width="1.100"/></svg><span>成员(46)</span></div>
<div class="tb" style="left:684px;width:28px"><svg style="left:0;top:9px" width="28" height="28" viewBox="684 675 28 28"><path d="M686.700 678h20.700a1.500 1.500 0 0 1 1.500 1.500V697c0 3-2.500 4.700-6.400 4.700V698H686.700a1.500 1.500 0 0 1-1.500-1.500v-17a1.500 1.500 0 0 1 1.500-1.500z" fill="#5f6269"/><circle cx="691" cy="688" r="1.700" fill="#fbfbfc"/><circle cx="697" cy="688" r="1.700" fill="#fbfbfc"/><circle cx="703" cy="688" r="1.700" fill="#fbfbfc"/></svg><span>聊天</span></div>
<div class="abs" style="left:700px;top:5px;width:16px;height:16px;border-radius:50%;background:#fb0a14;color:#fff;font-size:11px;font-weight:bold;line-height:16px;text-align:center">1</div>
<div class="tb" style="left:752px;width:26px"><svg style="left:0;top:10px" width="26" height="26" viewBox="752 676 26 26"><circle cx="765" cy="688.900" r="12.100" fill="#5f6269"/><circle cx="760.400" cy="685.400" r="1.600" fill="#fbfbfc"/><circle cx="769.400" cy="685.400" r="1.600" fill="#fbfbfc"/><path d="M756.900 691h16.500c-.4 4-3.700 7-8.250 7s-7.850-3-8.250-7z" fill="#fbfbfc"/></svg><span>表情</span></div>
<div class="tb" style="left:822px;width:22px"><svg style="left:0;top:10px" width="22" height="26" viewBox="822 676 22 26"><path d="M824.500 676.800H835.400v7.200H843v15.500a1.500 1.500 0 0 1-1.500 1.500h-17a1.500 1.500 0 0 1-1.500-1.500v-21.200a1.500 1.500 0 0 1 1.500-1.500z" fill="#5f6269"/><path d="M836.600 677v5.800h5.900z" fill="#5f6269"/><rect x="827" y="689.100" width="12.100" height="2" fill="#fbfbfc"/><rect x="827" y="693.900" width="12.100" height="2.200" fill="#fbfbfc"/></svg><span>文档</span></div>
<div class="tb" style="left:888px;width:26px"><svg style="left:0;top:10px" width="26" height="26" viewBox="0 0 26 26"><rect x="1" y="1" width="11" height="11" rx="1.600" fill="#5f6269"/><rect x="14.700" y="1.600" width="9.800" height="9.800" rx="1.500" fill="#fbfbfc" stroke="#5f6269" stroke-width="1.200"/><rect x="1" y="14.100" width="11" height="11" rx="1.800" fill="#5f6269"/><rect x="14.200" y="14.100" width="11" height="11" rx="1.800" fill="#5f6269"/></svg><span>设置</span></div>
<div id="leave" class="abs">离开会议</div>
</div>
<div id="taskbar" class="abs"><div class="topl"></div>
<div class="abs" style="left:9px;top:2px;width:37px;height:37px;border-radius:50%;background:radial-gradient(circle at 50% 102%,#3fd6ff 0,rgba(40,170,230,.7) 18%,rgba(30,110,190,0) 48%),radial-gradient(circle at 50% 30%,#5aa5dc 0,#2a74b8 38%,#154a86 68%,#0b2f5e 100%);box-shadow:0 0 0 1px #1c3f66,0 0 3px 1px rgba(200,220,240,.55),inset 0 0 2px rgba(255,255,255,.6)"></div>
<svg style="left:14px;top:7px" width="28" height="27" viewBox="0 0 27 26"><path d="M3 5.500c3-1.800 6-1.800 9.300.2l-1.800 7C7.400 10.900 4.300 10.900 1.300 12.500z" fill="#e8542c"/><path d="M14.300 6.300c3.200 1.700 6.200 1.600 9.500-.3l-1.900 7c-3.200 1.800-6.200 1.900-9.400.2z" fill="#8bc53f"/><path d="M0.900 14.300c3-1.700 6-1.700 9.200.1l-1.800 6.900c-3.100-1.800-6.100-1.800-9.100-.2z" fill="#3a9be0" transform="translate(1.500 0)"/><path d="M11.900 15c3.200 1.700 6.200 1.700 9.400-.2l-1.800 7c-3.200 1.700-6.300 1.800-9.400 0z" fill="#f8c527"/></svg>
<div class="abs" style="left:54px;top:3px;width:144px;height:34px;background:#ececec;font-size:12px;line-height:36px;color:#111;padding-left:26px;white-space:nowrap">输入你想搜的</div>
<svg style="left:56px;top:9px" width="22" height="22" viewBox="0 0 22 22"><path d="M11 3.500a7.500 7.500 0 1 0 7 10.200h-4.200a3.700 3.700 0 0 1-6.500-1.900h11.200A7.500 7.500 0 0 0 11 3.500zm-3.600 6a3.600 3.600 0 0 1 7 0z" fill="#2a8df0"/><path d="M2.500 17.500c-2-4.500 5-11.500 11.500-14 3.500-1.300 6-.5 5.500 2-0.300-1.200-2.200-1.500-4.500-.6C9 7.300 3 13.500 4 17.500c.4 1.500 2 1.800 4 1-2.500 1.600-4.800 1.300-5.500-1z" fill="#2a8df0"/></svg>
<div class="abs" style="left:198px;top:3px;width:55px;height:34px;background:#2b8bfd;color:#fff;font-size:12px;line-height:36px;text-align:center;white-space:nowrap">搜索一下</div>
<svg style="left:257px;top:5px" width="9" height="32" viewBox="0 0 9 32"><g fill="#3b4758"><circle cx="1.500" cy="2" r=".9"/><circle cx="4.500" cy="2" r=".9"/><circle cx="7.500" cy="2" r=".9"/><circle cx="1.500" cy="6" r=".9"/><circle cx="4.500" cy="6" r=".9"/><circle cx="7.500" cy="6" r=".9"/><circle cx="1.500" cy="10" r=".9"/><circle cx="4.500" cy="10" r=".9"/><circle cx="7.500" cy="10" r=".9"/><circle cx="1.500" cy="14" r=".9"/><circle cx="4.500" cy="14" r=".9"/><circle cx="7.500" cy="14" r=".9"/><circle cx="1.500" cy="18" r=".9"/><circle cx="4.500" cy="18" r=".9"/><circle cx="7.500" cy="18" r=".9"/><circle cx="1.500" cy="22" r=".9"/><circle cx="4.500" cy="22" r=".9"/><circle cx="7.500" cy="22" r=".9"/><circle cx="1.500" cy="26" r=".9"/><circle cx="4.500" cy="26" r=".9"/><circle cx="7.500" cy="26" r=".9"/><circle cx="1.500" cy="30" r=".9"/><circle cx="4.500" cy="30" r=".9"/><circle cx="7.500" cy="30" r=".9"/></g></svg>
<div class="abs" style="left:276px;top:1px;width:58px;height:38px;border:1px solid #56657c;border-radius:3px;background:linear-gradient(#d8e4f3,#b3c9e4 48%,#9db8da 52%,#b7cde8);box-shadow:inset 0 0 0 1px rgba(255,255,255,.55)"></div>
<div class="abs" style="left:296px;top:6px;width:26px;height:28px;background:linear-gradient(#41a5ee 0,#41a5ee 25%,#2b7cd3 25%,#2b7cd3 50%,#185abd 50%,#185abd 75%,#103f91 75%);border-radius:1px"></div>
<div class="abs" style="left:287px;top:11px;width:17px;height:18px;background:#185abd;color:#fff;font-size:14px;font-weight:bold;line-height:18px;text-align:center;box-shadow:0 0 2px rgba(0,0,0,.4)">W</div>
<div class="abs" style="left:338px;top:1px;width:58px;height:38px;border:1px solid #6d7f99;border-radius:3px;background:linear-gradient(#e4edf8,#c6d8ee 48%,#b4cae6 52%,#cfdff2);box-shadow:inset 0 0 0 1px rgba(255,255,255,.7)"></div>
<div class="abs" style="left:351px;top:4px;width:32px;height:32px;background:linear-gradient(90deg,#1463f5,#0a84ff 60%,#0a9dff)"></div>
<svg style="left:0;top:0" width="400" height="40" viewBox="0 728 400 40"><path d="M362.800 741.700L355.200 749q-.7.700 0 1.400L358.500 753.800l5.200-5z" fill="#dbe6ff"/><path d="M362.800 741.700l3.300 3.800-2.400 3.300z" fill="#9dbaff"/><path d="M371.300 741.200L363.200 749.300l3.900 4.500 4.200-4 4.300 4 3.300-4.500z" fill="#fff"/></svg>
<svg style="left:911px;top:5px" width="9" height="32" viewBox="0 0 9 32"><g fill="#3b4758"><circle cx="1.500" cy="2" r=".9"/><circle cx="4.500" cy="2" r=".9"/><circle cx="7.500" cy="2" r=".9"/><circle cx="1.500" cy="6" r=".9"/><circle cx="4.500" cy="6" r=".9"/><circle cx="7.500" cy="6" r=".9"/><circle cx="1.500" cy="10" r=".9"/><circle cx="4.500" cy="10" r=".9"/><circle cx="7.500" cy="10" r=".9"/><circle cx="1.500" cy="14" r=".9"/><circle cx="4.500" cy="14" r=".9"/><circle cx="7.500" cy="14" r=".9"/><circle cx="1.500" cy="18" r=".9"/><circle cx="4.500" cy="18" r=".9"/><circle cx="7.500" cy="18" r=".9"/><circle cx="1.500" cy="22" r=".9"/><circle cx="4.500" cy="22" r=".9"/><circle cx="7.500" cy="22" r=".9"/><circle cx="1.500" cy="26" r=".9"/><circle cx="4.500" cy="26" r=".9"/><circle cx="7.500" cy="26" r=".9"/><circle cx="1.500" cy="30" r=".9"/><circle cx="4.500" cy="30" r=".9"/><circle cx="7.500" cy="30" r=".9"/></g></svg>
<div class="abs" style="left:929.500px;top:12px;font-family:'Liberation Mono',monospace;font-size:11px;line-height:14px;color:#fff;letter-spacing:-.4px;text-shadow:0 0 2px #234">CH</div>
<svg style="left:949px;top:13px" width="18" height="13" viewBox="0 0 18 13"><path d="M7 0.500c2 .5 3 1.500 5 1" fill="none" stroke="#ddd" stroke-width="1"/><rect x="1" y="3.500" width="16" height="8.500" rx="1" fill="#d9d9d9" stroke="#8a8f96" stroke-width=".8"/><path d="M3 6h12M3 8h12M5 10h8" stroke="#7d828a" stroke-width="1" stroke-dasharray="1.300 1"/></svg>
<svg style="left:971px;top:10px" width="18" height="18" viewBox="0 0 18 18"><circle cx="9" cy="8.500" r="7.400" fill="#0f22a8" stroke="#b9bec9" stroke-width="1.200"/><circle cx="9" cy="6.500" r="4.800" fill="#3350e0" opacity=".55"/><text x="9" y="12.600" font-size="11.500" font-weight="bold" fill="#fff" text-anchor="middle" font-family="'Liberation Sans',sans-serif">?</text></svg>
<svg style="left:997px;top:7px" width="12" height="28" viewBox="0 0 12 28"><path d="M2 4.500h5.500v3.500H2zM4 4.500v-2h5.500v3.500h-2" fill="none" stroke="#fff" stroke-width="1.100"/><path d="M2 15.500h6l-3 3.500z" fill="#fff"/></svg>
<svg style="left:1044px;top:8px" width="190" height="26" viewBox="1044 736 190 26">
<rect x="1047.900" y="741.700" width="12.600" height="10.200" fill="#7e7e7e" stroke="#26282c" stroke-width="1.200"/><rect x="1048" y="753.600" width="4.600" height="2.600" fill="#8a8a8a" stroke="#26282c" stroke-width=".8"/><rect x="1055.600" y="753.600" width="4.800" height="2.600" fill="#8a8a8a" stroke="#26282c" stroke-width=".8"/>
<rect x="1070.900" y="741.400" width="14.200" height="14.600" fill="#2e2e30" stroke="#d8d8d8" stroke-width="1"/><path d="M1072.500 743.500h11M1072.500 745.500h11M1072.500 747.500h11M1072.500 749.500h11M1072.500 751.500h11M1072.500 753.500h11" stroke="#bdbdbd" stroke-width=".8"/>
<path d="M1095 746h3l4.500-4.300v14l-4.500-4.300h-3z" fill="#fafafa" stroke="#66707f" stroke-width=".8"/><path d="M1104.300 746.500c.9 1.300.9 3.300 0 4.600M1106.300 744.800c1.700 2.300 1.700 5.700 0 8M1108.200 743.200c2.400 3.300 2.400 8 0 11.200" fill="none" stroke="#f4f4f4" stroke-width="1.100"/>
<circle cx="1125.600" cy="748.800" r="7.600" fill="#efe013"/><path d="M1121 743a7.600 7.600 0 0 1 11.800 3.600M1130.200 754.600a7.600 7.600 0 0 1-11.800-3.600" fill="none" stroke="#35a535" stroke-width="2"/><path d="M1125.600 745v7.600M1121.800 748.800h7.600" stroke="#1e7d23" stroke-width="1.800"/>
<g fill="#fff" stroke="#4a5566" stroke-width=".6"><rect x="1142.200" y="751.800" width="2.400" height="2.600"/><rect x="1145.500" y="749.800" width="2.400" height="4.600"/><rect x="1148.800" y="747.500" width="2.400" height="6.900"/><rect x="1152.100" y="745.300" width="2.400" height="9.100"/><rect x="1155.400" y="743.400" width="2.400" height="11"/></g>
<ellipse cx="1174" cy="748.600" rx="5.900" ry="8" fill="#0d2f7c"/><path d="M1170.800 745.400l6.200 6.200-3.100 3.200v-12.400l3.100 3.200-6.200 6.200" fill="none" stroke="#fff" stroke-width="1.200"/>
<path d="M1190 746.300h3l5-4.800v14.600l-5-4.800h-3z" fill="#e0623c" stroke="#8d2d13" stroke-width=".8"/><path d="M1200.300 746.300c.9 1.400.9 3.600 0 5M1202.500 744.300c1.700 2.600 1.700 6.600 0 9.200" fill="none" stroke="#c9a79d" stroke-width="1.100"/>
<path d="M1215 743.800h7.500v9.500a1.800 1.800 0 0 1-1.800 1.800h-3.900a1.800 1.800 0 0 1-1.800-1.800z" fill="none" stroke="#fff" stroke-width="1.500"/><path d="M1217.300 741.300v3M1220.400 741.300v3" stroke="#fff" stroke-width="1.400"/><path d="M1222.500 745.300h3.500v3.600l2.800 0M1222.500 752h3.500v-1.500" fill="none" stroke="#fff" stroke-width="1.400"/><rect x="1222.800" y="744.600" width="3.600" height="5" fill="#fff"/><path d="M1226.400 745.800h2.400M1226.400 748.500h2.400" stroke="#fff" stroke-width="1.200"/>
</svg>
<div class="abs" style="left:1292px;top:15px;width:56px;height:22px;background:#6b3040;opacity:.62;filter:blur(3px);border-radius:4px"></div>
<div class="abs" style="left:1240px;top:4px;width:70px;height:17px;color:#fff;font-size:12.500px;line-height:17px;text-align:center;text-shadow:0 0 3px rgba(20,40,70,.8)">9:10</div>
<div class="abs" style="left:1235px;top:22px;width:80px;height:17px;color:#fff;font-size:12.500px;letter-spacing:.45px;line-height:17px;text-align:center;text-shadow:0 0 3px rgba(20,40,70,.8)">2020/4/18</div>
<svg style="left:1320px;top:10px" width="24" height="24" viewBox="1320 738 24 24"><path d="M1323 744.500h3.500v13.500h-2a1.500 1.500 0 0 1-1.500-1.500z" fill="#eceef1" stroke="#5b5560" stroke-width=".7"/><path d="M1326.300 741.300h14.500v15.200a1.500 1.500 0 0 1-1.500 1.500h-13z" fill="#f7f7f8" stroke="#5b5560" stroke-width=".7"/><rect x="1328.200" y="743.800" width="2.600" height="2.600" fill="#5a4a55"/><path d="M1332 745h6.500M1328.200 748.500h10.500M1328.200 751h10.500M1328.200 753.500h10.500M1328.200 756h7" stroke="#5a4a55" stroke-width="1"/></svg>
<div class="abs" style="left:1334.500px;top:4px;width:13.500px;height:14.500px;border-radius:2px;background:#e0040c;color:#fff;font-size:11px;font-weight:bold;line-height:15px;text-align:center">5</div>
<div class="abs" style="left:1352px;top:1px;width:14px;height:39px;border-left:1px solid #5b6a80;background:linear-gradient(90deg,#a9b9cf,#8c9fb8);box-shadow:inset 1px 0 0 rgba(255,255,255,.45)"></div>
</div>
</body></html>
